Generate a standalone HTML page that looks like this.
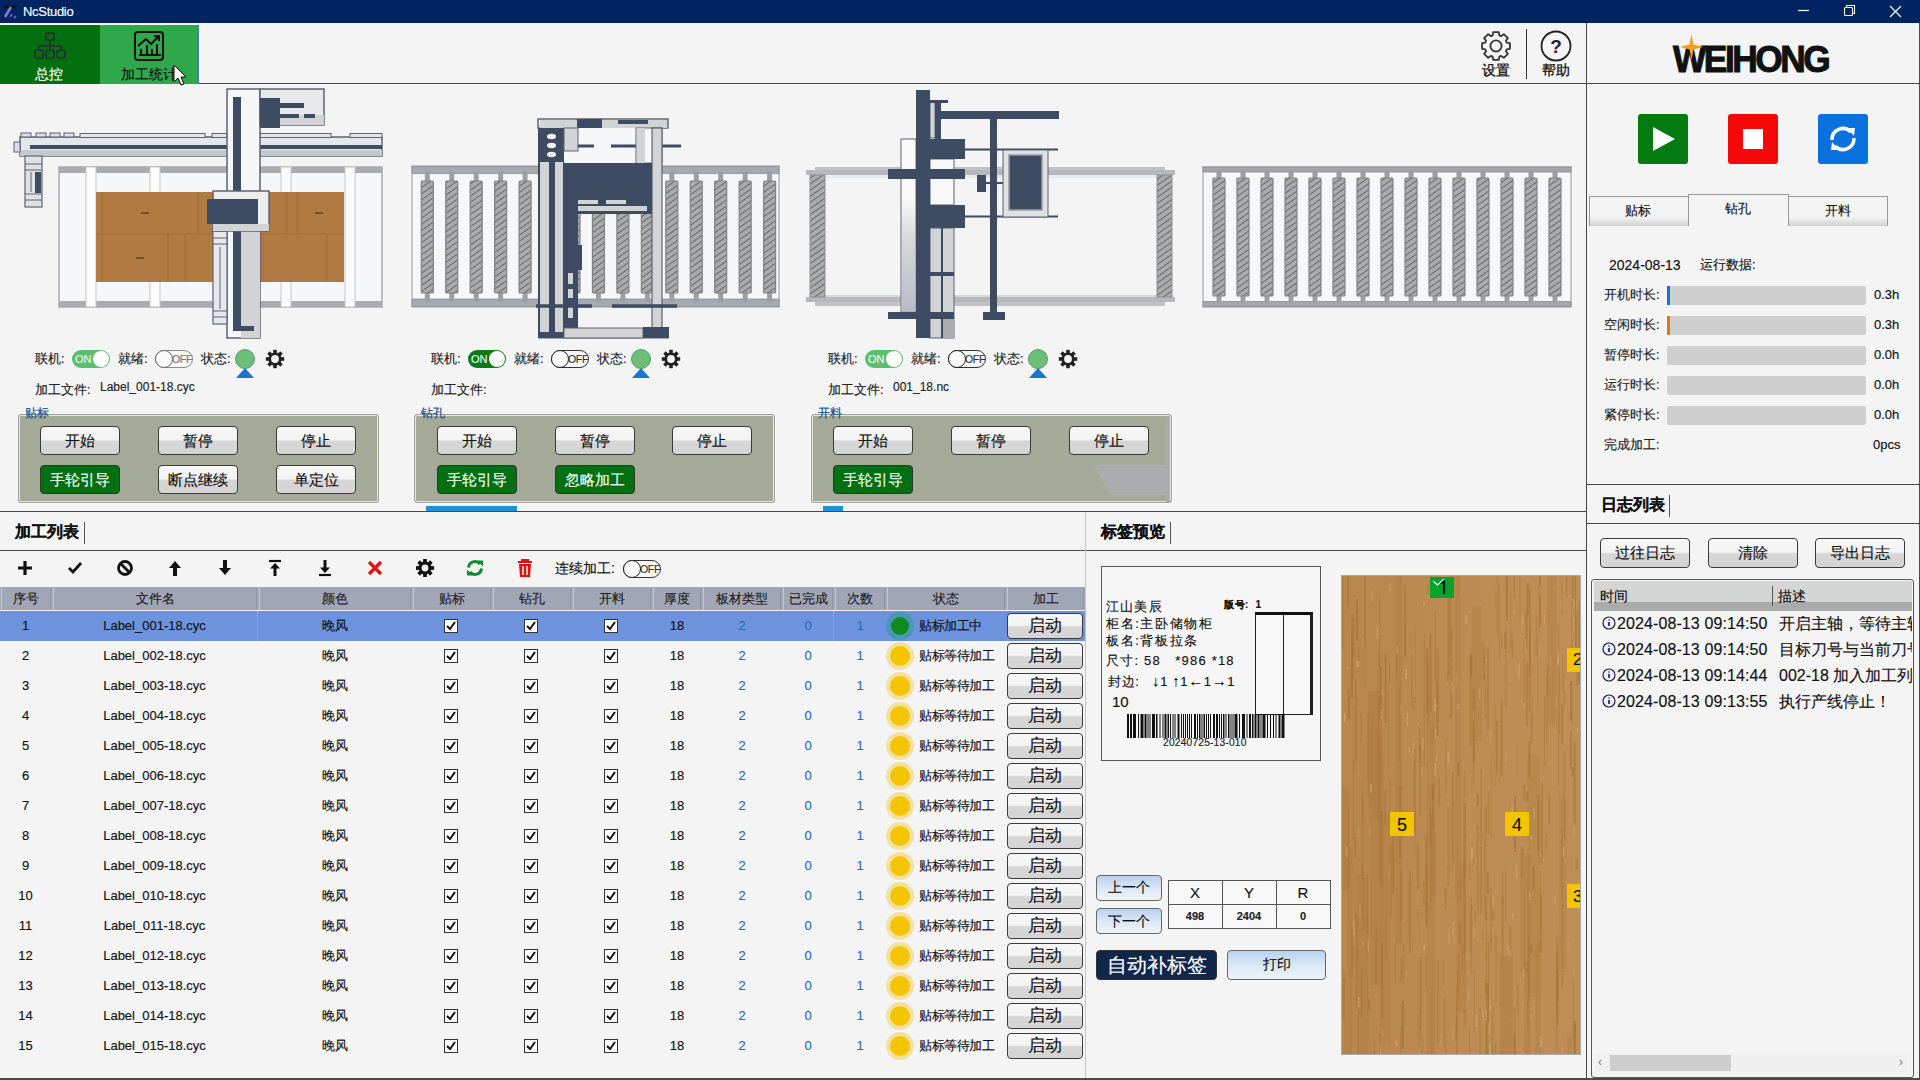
<!DOCTYPE html>
<html><head><meta charset="utf-8">
<style>
*{box-sizing:border-box;margin:0;padding:0}
html,body{width:1920px;height:1080px;overflow:hidden;background:#f4f4f4;font-family:"Liberation Sans",sans-serif;color:#111;position:relative;-webkit-text-stroke:0.15px currentColor}
.a{position:absolute}
.t{position:absolute;white-space:nowrap;line-height:1}
.hl{position:absolute;height:1px;background:#464646}
.vl{position:absolute;width:1px;background:#464646}
.btn{position:absolute;width:80px;height:29px;border:1px solid #3a3a3a;border-radius:4px;background:linear-gradient(#f7f7f7 0%,#f3f3f3 47%,#d6d6d6 53%,#d4d4d4 100%);font-size:15px;text-align:center;line-height:27px;color:#111}
.gbtn{position:absolute;width:80px;height:29px;border:1px solid #2a3a2a;border-radius:4px;background:#036e12;font-size:15px;text-align:center;line-height:27px;color:#f4fff4}
.grp{position:absolute;width:361px;height:89px;border:1px solid #9c9c9c;box-shadow:inset 0 0 0 1px #e6e6e6,0 0 0 1px #fbfbfb;border-radius:3px;background:#a5aa98}
.glab{position:absolute;font-size:11.5px;color:#174f8a;line-height:1;-webkit-text-stroke:0.2px #174f8a}
.lab{font-size:13px;color:#222}
.tog{position:absolute;width:38px;height:18px;border-radius:9px}
.ton{background:#5cbf6f}
.ton2{background:#0a7a1a}
.ton span,.ton2 span{position:absolute;left:3px;top:2px;font-size:11px;color:#e8f5e8;line-height:14px}
.ton i,.ton2 i{position:absolute;right:1px;top:1px;width:16px;height:16px;border-radius:8px;background:#fff}
.toff{border:1px solid #8a8a8a;background:#f8f8f8}
.toff i{position:absolute;left:-1px;top:-1px;width:18px;height:18px;border-radius:9px;border:1px solid #666;background:#fbfbfb}
.toff span{position:absolute;left:16px;top:2px;font-size:10.5px;color:#777;line-height:12px;letter-spacing:-0.3px}
</style></head><body>
<!-- title bar -->
<div class="a" style="left:0;top:0;width:1920px;height:23px;background:#002462"></div>
<div class="t" style="left:23px;top:5px;font-size:13px;color:#fff;letter-spacing:-0.3px">NcStudio</div>
<svg class="a" style="left:2px;top:4px" width="18" height="16" viewBox="0 0 18 16"><path d="M2 3h12" stroke="#111" stroke-width="2.5"/><path d="M9 3L3 13" stroke="#8a7ad8" stroke-width="2.5"/><path d="M10 10l-2 3M14 12l-2 2" stroke="#6a5ac8" stroke-width="2"/></svg>
<svg class="a" style="left:1798px;top:9px" width="12" height="3"><path d="M0 1.5h11" stroke="#fff" stroke-width="1.2"/></svg>
<svg class="a" style="left:1843px;top:4px" width="13" height="13"><path d="M3.5 3.5V1.5h8v8h-2" stroke="#fff" stroke-width="1.1" fill="none"/><rect x="1.5" y="3.5" width="8" height="8" rx="1" stroke="#fff" stroke-width="1.1" fill="none"/></svg>
<svg class="a" style="left:1889px;top:5px" width="13" height="13"><path d="M1 1l11 11M12 1L1 12" stroke="#fff" stroke-width="1.2"/></svg>
<!-- toolbar -->
<div class="a" style="left:0;top:25px;width:100px;height:59px;background:#026e0d"></div>
<div class="a" style="left:100px;top:25px;width:99px;height:59px;background:#2ea84b;border-right:1px solid #3a7ab0"></div>
<div class="hl" style="left:199px;top:83px;width:1721px"></div>
<div class="vl" style="left:1586px;top:23px;height:1057px"></div>

<!-- tab icons -->
<svg class="a" style="left:33px;top:31px" width="34" height="30" viewBox="0 0 34 30"><g fill="none" stroke="#2a2a3a" stroke-width="1.6"><rect x="13" y="2" width="8" height="7" rx="1.5"/><path d="M17 9v6M6 19v-4h22v4M17 15v4"/><rect x="2" y="19" width="8" height="8" rx="2"/><rect x="13" y="19" width="8" height="8" rx="2"/><rect x="24" y="19" width="8" height="8" rx="2"/></g></svg>
<div class="t" style="left:35px;top:67px;font-size:14px;color:#fff">总控</div>
<svg class="a" style="left:133px;top:30px" width="32" height="32" viewBox="0 0 32 32"><g fill="none" stroke="#111" stroke-width="2"><rect x="2" y="2" width="28" height="28" rx="3"/><path d="M5 16l8-7 5 5 8-8M21 6h5v5"/><path d="M6 25h22M8 24v-5M14 24v-9M19 24v-5M24 24v-10"/></g></svg>
<div class="t" style="left:121px;top:67px;font-size:14px;color:#111">加工统计</div>
<svg class="a" style="left:173px;top:64px" width="14" height="22" viewBox="0 0 14 22"><path d="M1 1v17l4-4 3 7 3-1-3-7h5z" fill="#fff" stroke="#000" stroke-width="1"/></svg>
<!-- settings/help -->
<svg class="a" style="left:1480px;top:30px" width="32" height="32" viewBox="0 0 32 32"><path d="M26.70 12.69 L29.92 13.18 L29.92 18.82 L26.70 19.31 L25.91 21.23 L27.84 23.85 L23.85 27.84 L21.23 25.91 L19.31 26.70 L18.82 29.92 L13.18 29.92 L12.69 26.70 L10.77 25.91 L8.15 27.84 L4.16 23.85 L6.09 21.23 L5.30 19.31 L2.08 18.82 L2.08 13.18 L5.30 12.69 L6.09 10.77 L4.16 8.15 L8.15 4.16 L10.77 6.09 L12.69 5.30 L13.18 2.08 L18.82 2.08 L19.31 5.30 L21.23 6.09 L23.85 4.16 L27.84 8.15 L25.91 10.77Z" fill="none" stroke="#333" stroke-width="1.8" stroke-linejoin="round"/><circle cx="16" cy="16" r="5.6" fill="none" stroke="#333" stroke-width="1.8"/></svg>
<div class="t" style="left:1482px;top:63px;font-size:14px;color:#111;-webkit-text-stroke:0.3px #111">设置</div>
<div class="a" style="left:1526px;top:29px;width:1px;height:50px;background:#333"></div>
<svg class="a" style="left:1540px;top:30px" width="32" height="32" viewBox="0 0 32 32"><circle cx="16" cy="16" r="14.5" fill="none" stroke="#222" stroke-width="1.8"/><text x="16" y="22.5" font-size="19" font-weight="bold" text-anchor="middle" font-family="Liberation Sans" fill="#222">?</text></svg>
<div class="t" style="left:1542px;top:63px;font-size:14px;color:#111;-webkit-text-stroke:0.3px #111">帮助</div>
<!-- logo -->
<div class="t" style="left:1673px;top:42px;font-size:36px;font-weight:bold;color:#111;letter-spacing:-2.5px;-webkit-text-stroke:1px #111;transform:scaleX(0.98);transform-origin:left">WEIHONG</div>
<svg class="a" style="left:1680px;top:34px" width="23" height="26" viewBox="0 0 23 26"><path d="M11.5 0 L13.5 10.5 L23 13 L13.5 15.5 L11.5 26 L9.5 15.5 L0 13 L9.5 10.5z" fill="#f0a020"/></svg>
<!-- control buttons -->
<div class="a" style="left:1638px;top:114px;width:50px;height:50px;background:#047a10;border-radius:3px"></div>
<svg class="a" style="left:1638px;top:114px" width="50" height="50"><path d="M15 13 L37 25 L15 37z" fill="#fff"/></svg>
<div class="a" style="left:1728px;top:114px;width:50px;height:50px;background:#f70808;border-radius:3px"></div>
<div class="a" style="left:1743px;top:129px;width:20px;height:20px;background:#fff"></div>
<div class="a" style="left:1818px;top:114px;width:50px;height:50px;background:#0a72e0;border-radius:3px"></div>
<svg class="a" style="left:1818px;top:114px" width="50" height="50" viewBox="0 0 50 50"><g fill="none" stroke="#fff" stroke-width="3.5"><path d="M14 26a11 11 0 0 1 19-8"/><path d="M36 24a11 11 0 0 1-19 8"/></g><path d="M29 14l8 0-1 8z" fill="#fff"/><path d="M21 36l-8 0 1-8z" fill="#fff"/></svg>

<!-- right tabs -->
<div class="a" style="left:1589px;top:196px;width:100px;height:30px;border:1px solid #9a9a9a;border-bottom:none;background:linear-gradient(#f4f4f4 70%,#d0d0d0 100%)"></div>
<div class="t" style="left:1625px;top:204px;font-size:13px">贴标</div>
<div class="a" style="left:1688px;top:194px;width:101px;height:32px;border:1px solid #9a9a9a;border-bottom:none;background:#f4f4f4"></div>
<div class="t" style="left:1725px;top:202px;font-size:13px">钻孔</div>
<div class="a" style="left:1788px;top:196px;width:100px;height:30px;border:1px solid #9a9a9a;border-bottom:none;background:linear-gradient(#f4f4f4 70%,#d0d0d0 100%)"></div>
<div class="t" style="left:1825px;top:204px;font-size:13px">开料</div>
<!-- running data -->
<div class="t" style="left:1609px;top:258px;font-size:14px">2024-08-13</div>
<div class="t" style="left:1700px;top:258px;font-size:13px">运行数据:</div>
<div class="t lab" style="left:1604px;top:288px">开机时长:</div>
<div class="a" style="left:1667px;top:286px;width:199px;height:19px;background:#cfcfcf;border-radius:2px"></div>
<div class="a" style="left:1667px;top:286px;width:3px;height:19px;background:#1a6fd8"></div>
<div class="t" style="left:1874px;top:288px;font-size:13px">0.3h</div>
<div class="t lab" style="left:1604px;top:318px">空闲时长:</div>
<div class="a" style="left:1667px;top:316px;width:199px;height:19px;background:#cfcfcf;border-radius:2px"></div>
<div class="a" style="left:1667px;top:316px;width:3px;height:19px;background:#d87a1a"></div>
<div class="t" style="left:1874px;top:318px;font-size:13px">0.3h</div>
<div class="t lab" style="left:1604px;top:348px">暂停时长:</div>
<div class="a" style="left:1667px;top:346px;width:199px;height:19px;background:#cfcfcf;border-radius:2px"></div>
<div class="t" style="left:1874px;top:348px;font-size:13px">0.0h</div>
<div class="t lab" style="left:1604px;top:378px">运行时长:</div>
<div class="a" style="left:1667px;top:376px;width:199px;height:19px;background:#cfcfcf;border-radius:2px"></div>
<div class="t" style="left:1874px;top:378px;font-size:13px">0.0h</div>
<div class="t lab" style="left:1604px;top:408px">紧停时长:</div>
<div class="a" style="left:1667px;top:406px;width:199px;height:19px;background:#cfcfcf;border-radius:2px"></div>
<div class="t" style="left:1874px;top:408px;font-size:13px">0.0h</div>
<div class="t lab" style="left:1604px;top:438px">完成加工:</div>
<div class="t" style="left:1873px;top:438px;font-size:13px">0pcs</div>
<div class="hl" style="left:1586px;top:484px;width:334px"></div>
<!-- log list -->
<div class="t" style="left:1601px;top:497px;font-size:16px;font-weight:bold">日志列表</div>
<div class="a" style="left:1669px;top:495px;width:1px;height:22px;background:#555"></div>
<div class="hl" style="left:1586px;top:523px;width:334px"></div>
<div class="btn" style="left:1600px;top:538px;width:90px;height:30px;line-height:28px;font-size:15px">过往日志</div>
<div class="btn" style="left:1708px;top:538px;width:90px;height:30px;line-height:28px;font-size:15px">清除</div>
<div class="btn" style="left:1815px;top:538px;width:90px;height:30px;line-height:28px;font-size:15px">导出日志</div>
<div class="a" style="left:1591px;top:579px;width:323px;height:499px;border:1.5px solid #585858;border-radius:3px;background:#f4f4f4"></div>
<div class="a" style="left:1594px;top:581px;width:318px;height:30px;background:linear-gradient(#d4d5d5 0%,#d3d4d4 70%,#a9abab 70%,#a9abab 100%)"></div>
<div class="a" style="left:1772px;top:586px;width:1px;height:20px;background:#555"></div>
<div class="t" style="left:1600px;top:589px;font-size:14px">时间</div>
<div class="t" style="left:1778px;top:589px;font-size:14px">描述</div>
<svg class="a" style="left:1601px;top:616px" width="16" height="16" viewBox="0 0 16 16"><circle cx="8" cy="7" r="6" fill="#eef" stroke="#223" stroke-width="1.2"/><path d="M8 6v4M8 3.5v1" stroke="#1a2a9a" stroke-width="1.8"/></svg>
<div class="t" style="left:1617px;top:616px;font-size:16px;letter-spacing:0.1px">2024-08-13 09:14:50</div>
<div class="t" style="left:1779px;top:616px;font-size:16px;width:133px;overflow:hidden">开启主轴，等待主轴</div>
<svg class="a" style="left:1601px;top:642px" width="16" height="16" viewBox="0 0 16 16"><circle cx="8" cy="7" r="6" fill="#eef" stroke="#223" stroke-width="1.2"/><path d="M8 6v4M8 3.5v1" stroke="#1a2a9a" stroke-width="1.8"/></svg>
<div class="t" style="left:1617px;top:642px;font-size:16px;letter-spacing:0.1px">2024-08-13 09:14:50</div>
<div class="t" style="left:1779px;top:642px;font-size:16px;width:133px;overflow:hidden">目标刀号与当前刀号</div>
<svg class="a" style="left:1601px;top:668px" width="16" height="16" viewBox="0 0 16 16"><circle cx="8" cy="7" r="6" fill="#eef" stroke="#223" stroke-width="1.2"/><path d="M8 6v4M8 3.5v1" stroke="#1a2a9a" stroke-width="1.8"/></svg>
<div class="t" style="left:1617px;top:668px;font-size:16px;letter-spacing:0.1px">2024-08-13 09:14:44</div>
<div class="t" style="left:1779px;top:668px;font-size:16px;width:133px;overflow:hidden">002-18 加入加工列表</div>
<svg class="a" style="left:1601px;top:694px" width="16" height="16" viewBox="0 0 16 16"><circle cx="8" cy="7" r="6" fill="#eef" stroke="#223" stroke-width="1.2"/><path d="M8 6v4M8 3.5v1" stroke="#1a2a9a" stroke-width="1.8"/></svg>
<div class="t" style="left:1617px;top:694px;font-size:16px;letter-spacing:0.1px">2024-08-13 09:13:55</div>
<div class="t" style="left:1779px;top:694px;font-size:16px;width:133px;overflow:hidden">执行产线停止！</div>

<div class="a" style="left:1595px;top:1054px;width:316px;height:18px;background:#f0f0f0"></div>
<div class="a" style="left:1610px;top:1055px;width:121px;height:16px;background:#cdcdcd"></div>
<div class="t" style="left:1598px;top:1056px;font-size:12px;color:#888">&#8249;</div>
<div class="t" style="left:1899px;top:1056px;font-size:12px;color:#888">&#8250;</div>


<!-- machines -->
<svg class="a" style="left:0;top:84px" width="1585" height="265" viewBox="0 84 1585 265">
<defs><pattern id="hat" width="5" height="5" patternUnits="userSpaceOnUse" patternTransform="rotate(-35)"><rect width="5" height="5" fill="#a9aaac"/><line x1="0" y1="0.5" x2="5" y2="0.5" stroke="#66686b" stroke-width="1"/></pattern><linearGradient id="wood" x1="0" x2="1"><stop offset="0" stop-color="#b07940"/><stop offset="1" stop-color="#ad7a42"/></linearGradient></defs>
<rect x="59" y="167" width="323" height="140" fill="#f6f7f8" stroke="#a9abae" stroke-width="1.5"/>
<rect x="59" y="167" width="323" height="6" fill="#a9abae"/>
<rect x="59" y="301" width="323" height="6" fill="#a9abae"/>
<rect x="86" y="167" width="10" height="140" fill="#fbfbfb" stroke="#c8c8c8" stroke-width="1"/>
<rect x="150" y="167" width="10" height="140" fill="#fbfbfb" stroke="#c8c8c8" stroke-width="1"/>
<rect x="281" y="167" width="10" height="140" fill="#fbfbfb" stroke="#c8c8c8" stroke-width="1"/>
<rect x="345" y="167" width="10" height="140" fill="#fbfbfb" stroke="#c8c8c8" stroke-width="1"/>
<rect x="96" y="192" width="248" height="90" fill="#b07a42"/>
<path d="M96 234H344M102 192V282M198 192V234M287 192V234M297 192V234M168 234V282M185 234V282M262 234V282M327 234V282" stroke="#9a6530" stroke-width="1" fill="none" opacity="0.55"/>
<path d="M141 213h8M136 258h8M315 213h8" stroke="#3a2a1a" stroke-width="1.2"/>
<rect x="20" y="137" width="362" height="19" fill="#e4e6e9" stroke="#5c6372" stroke-width="1.5"/>
<rect x="20" y="150" width="362" height="6" fill="#c4c8cf"/>
<rect x="30" y="145" width="352" height="4" fill="#3d4b63"/>
<rect x="21" y="133" width="10" height="4" fill="#dde" stroke="#5c6372" stroke-width="1"/>
<rect x="36" y="133" width="10" height="4" fill="#dde" stroke="#5c6372" stroke-width="1"/>
<rect x="50" y="133" width="10" height="4" fill="#dde" stroke="#5c6372" stroke-width="1"/>
<rect x="64" y="133" width="10" height="4" fill="#dde" stroke="#5c6372" stroke-width="1"/>
<rect x="80" y="133.5" width="125" height="4" fill="#e4e6ea" stroke="#5c6372" stroke-width="1"/><rect x="212" y="133.5" width="15" height="4" fill="#e4e6ea" stroke="#5c6372" stroke-width="1"/><rect x="260" y="133.5" width="71" height="4" fill="#e4e6ea" stroke="#5c6372" stroke-width="1"/><rect x="350" y="133.5" width="32" height="4" fill="#e4e6ea" stroke="#5c6372" stroke-width="1"/>
<rect x="14" y="142" width="6" height="10" fill="#dde" stroke="#5c6372" stroke-width="1"/>
<rect x="25" y="156" width="17" height="51" fill="#dfe1e4" stroke="#5c6372" stroke-width="1.2"/>
<path d="M25 164h17M25 170h17M25 194h17M25 200h17M31 172v20" stroke="#5c6372" stroke-width="1"/>
<rect x="35" y="172" width="6" height="21" fill="#3d4b63"/>
<rect x="227" y="89" width="33" height="249" fill="#f6f7f8" stroke="#5c6372" stroke-width="1.5"/>
<rect x="241" y="231" width="19" height="107" fill="#d2d3d5"/>
<path d="M233 97h8v229h13v5h-21z" fill="#3d4b63"/>
<rect x="260" y="89" width="64" height="36" fill="#e8e9ea" stroke="#5c6372" stroke-width="1.5"/>
<rect x="280" y="115" width="44" height="10" fill="#d2d3d5"/>
<rect x="260" y="98" width="20" height="30" fill="#3d4b63"/>
<rect x="280" y="103" width="24" height="5" fill="#3d4b63"/>
<rect x="280" y="114" width="19" height="4" fill="#3d4b63"/>
<rect x="304" y="114" width="11" height="4" fill="#3d4b63"/>
<rect x="213" y="231" width="14" height="93" fill="#e6e8ea" stroke="#5c6372" stroke-width="1.2"/>
<path d="M213 238h14M213 244h14M213 311h14M213 317h14M220 247v62" stroke="#5c6372" stroke-width="1"/>
<rect x="213" y="191" width="56" height="40" fill="#eceef0" stroke="#5c6372" stroke-width="1.5"/>
<rect x="213" y="224" width="56" height="7" fill="#d2d3d5"/>
<rect x="207" y="199" width="51" height="25" fill="#3d4b63"/>
<rect x="412" y="166" width="367" height="141" fill="#f6f7f8" stroke="#b5b7ba" stroke-width="1.5"/>
<rect x="412" y="166.5" width="367" height="7" fill="#a5a9b2" stroke="#8c9098" stroke-width="0.8"/>
<rect x="412" y="299" width="367" height="7.5" fill="#a5a9b2" stroke="#8c9098" stroke-width="0.8"/>
<rect x="424.8" y="171" width="5" height="11" fill="#9c9ea2"/>
<rect x="424.8" y="292" width="5" height="10" fill="#9c9ea2"/>
<rect x="421.3" y="181" width="12" height="112" rx="1" fill="url(#hat)" stroke="#808285" stroke-width="1.2"/>
<rect x="449.25" y="171" width="5" height="11" fill="#9c9ea2"/>
<rect x="449.25" y="292" width="5" height="10" fill="#9c9ea2"/>
<rect x="445.75" y="181" width="12" height="112" rx="1" fill="url(#hat)" stroke="#808285" stroke-width="1.2"/>
<rect x="473.7" y="171" width="5" height="11" fill="#9c9ea2"/>
<rect x="473.7" y="292" width="5" height="10" fill="#9c9ea2"/>
<rect x="470.2" y="181" width="12" height="112" rx="1" fill="url(#hat)" stroke="#808285" stroke-width="1.2"/>
<rect x="498.15" y="171" width="5" height="11" fill="#9c9ea2"/>
<rect x="498.15" y="292" width="5" height="10" fill="#9c9ea2"/>
<rect x="494.65" y="181" width="12" height="112" rx="1" fill="url(#hat)" stroke="#808285" stroke-width="1.2"/>
<rect x="522.6" y="171" width="5" height="11" fill="#9c9ea2"/>
<rect x="522.6" y="292" width="5" height="10" fill="#9c9ea2"/>
<rect x="519.1" y="181" width="12" height="112" rx="1" fill="url(#hat)" stroke="#808285" stroke-width="1.2"/>
<rect x="547.05" y="171" width="5" height="11" fill="#9c9ea2"/>
<rect x="547.05" y="292" width="5" height="10" fill="#9c9ea2"/>
<rect x="543.55" y="181" width="12" height="112" rx="1" fill="url(#hat)" stroke="#808285" stroke-width="1.2"/>
<rect x="571.5" y="171" width="5" height="11" fill="#9c9ea2"/>
<rect x="571.5" y="292" width="5" height="10" fill="#9c9ea2"/>
<rect x="568.0" y="181" width="12" height="112" rx="1" fill="url(#hat)" stroke="#808285" stroke-width="1.2"/>
<rect x="595.95" y="171" width="5" height="11" fill="#9c9ea2"/>
<rect x="595.95" y="292" width="5" height="10" fill="#9c9ea2"/>
<rect x="592.45" y="181" width="12" height="112" rx="1" fill="url(#hat)" stroke="#808285" stroke-width="1.2"/>
<rect x="620.4" y="171" width="5" height="11" fill="#9c9ea2"/>
<rect x="620.4" y="292" width="5" height="10" fill="#9c9ea2"/>
<rect x="616.9" y="181" width="12" height="112" rx="1" fill="url(#hat)" stroke="#808285" stroke-width="1.2"/>
<rect x="644.85" y="171" width="5" height="11" fill="#9c9ea2"/>
<rect x="644.85" y="292" width="5" height="10" fill="#9c9ea2"/>
<rect x="641.35" y="181" width="12" height="112" rx="1" fill="url(#hat)" stroke="#808285" stroke-width="1.2"/>
<rect x="669.3" y="171" width="5" height="11" fill="#9c9ea2"/>
<rect x="669.3" y="292" width="5" height="10" fill="#9c9ea2"/>
<rect x="665.8" y="181" width="12" height="112" rx="1" fill="url(#hat)" stroke="#808285" stroke-width="1.2"/>
<rect x="693.75" y="171" width="5" height="11" fill="#9c9ea2"/>
<rect x="693.75" y="292" width="5" height="10" fill="#9c9ea2"/>
<rect x="690.25" y="181" width="12" height="112" rx="1" fill="url(#hat)" stroke="#808285" stroke-width="1.2"/>
<rect x="718.2" y="171" width="5" height="11" fill="#9c9ea2"/>
<rect x="718.2" y="292" width="5" height="10" fill="#9c9ea2"/>
<rect x="714.7" y="181" width="12" height="112" rx="1" fill="url(#hat)" stroke="#808285" stroke-width="1.2"/>
<rect x="742.65" y="171" width="5" height="11" fill="#9c9ea2"/>
<rect x="742.65" y="292" width="5" height="10" fill="#9c9ea2"/>
<rect x="739.15" y="181" width="12" height="112" rx="1" fill="url(#hat)" stroke="#808285" stroke-width="1.2"/>
<rect x="767.1" y="171" width="5" height="11" fill="#9c9ea2"/>
<rect x="767.1" y="292" width="5" height="10" fill="#9c9ea2"/>
<rect x="763.6" y="181" width="12" height="112" rx="1" fill="url(#hat)" stroke="#808285" stroke-width="1.2"/>
<rect x="1203" y="167" width="368" height="140" fill="#f6f7f8" stroke="#b5b7ba" stroke-width="1.5"/>
<rect x="1203" y="167" width="368" height="5" fill="#a4a6aa" stroke="#8a8c90" stroke-width="0.8"/>
<rect x="1203" y="301.5" width="368" height="5" fill="#a4a6aa" stroke="#8a8c90" stroke-width="0.8"/>
<rect x="1216.5" y="172" width="5" height="7" fill="#9c9ea2"/>
<rect x="1216.5" y="295" width="5" height="7" fill="#9c9ea2"/>
<rect x="1213" y="178" width="12" height="118" rx="1" fill="url(#hat)" stroke="#808285" stroke-width="1.2"/>
<rect x="1240.5" y="172" width="5" height="7" fill="#9c9ea2"/>
<rect x="1240.5" y="295" width="5" height="7" fill="#9c9ea2"/>
<rect x="1237" y="178" width="12" height="118" rx="1" fill="url(#hat)" stroke="#808285" stroke-width="1.2"/>
<rect x="1264.5" y="172" width="5" height="7" fill="#9c9ea2"/>
<rect x="1264.5" y="295" width="5" height="7" fill="#9c9ea2"/>
<rect x="1261" y="178" width="12" height="118" rx="1" fill="url(#hat)" stroke="#808285" stroke-width="1.2"/>
<rect x="1288.5" y="172" width="5" height="7" fill="#9c9ea2"/>
<rect x="1288.5" y="295" width="5" height="7" fill="#9c9ea2"/>
<rect x="1285" y="178" width="12" height="118" rx="1" fill="url(#hat)" stroke="#808285" stroke-width="1.2"/>
<rect x="1312.5" y="172" width="5" height="7" fill="#9c9ea2"/>
<rect x="1312.5" y="295" width="5" height="7" fill="#9c9ea2"/>
<rect x="1309" y="178" width="12" height="118" rx="1" fill="url(#hat)" stroke="#808285" stroke-width="1.2"/>
<rect x="1336.5" y="172" width="5" height="7" fill="#9c9ea2"/>
<rect x="1336.5" y="295" width="5" height="7" fill="#9c9ea2"/>
<rect x="1333" y="178" width="12" height="118" rx="1" fill="url(#hat)" stroke="#808285" stroke-width="1.2"/>
<rect x="1360.5" y="172" width="5" height="7" fill="#9c9ea2"/>
<rect x="1360.5" y="295" width="5" height="7" fill="#9c9ea2"/>
<rect x="1357" y="178" width="12" height="118" rx="1" fill="url(#hat)" stroke="#808285" stroke-width="1.2"/>
<rect x="1384.5" y="172" width="5" height="7" fill="#9c9ea2"/>
<rect x="1384.5" y="295" width="5" height="7" fill="#9c9ea2"/>
<rect x="1381" y="178" width="12" height="118" rx="1" fill="url(#hat)" stroke="#808285" stroke-width="1.2"/>
<rect x="1408.5" y="172" width="5" height="7" fill="#9c9ea2"/>
<rect x="1408.5" y="295" width="5" height="7" fill="#9c9ea2"/>
<rect x="1405" y="178" width="12" height="118" rx="1" fill="url(#hat)" stroke="#808285" stroke-width="1.2"/>
<rect x="1432.5" y="172" width="5" height="7" fill="#9c9ea2"/>
<rect x="1432.5" y="295" width="5" height="7" fill="#9c9ea2"/>
<rect x="1429" y="178" width="12" height="118" rx="1" fill="url(#hat)" stroke="#808285" stroke-width="1.2"/>
<rect x="1456.5" y="172" width="5" height="7" fill="#9c9ea2"/>
<rect x="1456.5" y="295" width="5" height="7" fill="#9c9ea2"/>
<rect x="1453" y="178" width="12" height="118" rx="1" fill="url(#hat)" stroke="#808285" stroke-width="1.2"/>
<rect x="1480.5" y="172" width="5" height="7" fill="#9c9ea2"/>
<rect x="1480.5" y="295" width="5" height="7" fill="#9c9ea2"/>
<rect x="1477" y="178" width="12" height="118" rx="1" fill="url(#hat)" stroke="#808285" stroke-width="1.2"/>
<rect x="1504.5" y="172" width="5" height="7" fill="#9c9ea2"/>
<rect x="1504.5" y="295" width="5" height="7" fill="#9c9ea2"/>
<rect x="1501" y="178" width="12" height="118" rx="1" fill="url(#hat)" stroke="#808285" stroke-width="1.2"/>
<rect x="1528.5" y="172" width="5" height="7" fill="#9c9ea2"/>
<rect x="1528.5" y="295" width="5" height="7" fill="#9c9ea2"/>
<rect x="1525" y="178" width="12" height="118" rx="1" fill="url(#hat)" stroke="#808285" stroke-width="1.2"/>
<rect x="1552.5" y="172" width="5" height="7" fill="#9c9ea2"/>
<rect x="1552.5" y="295" width="5" height="7" fill="#9c9ea2"/>
<rect x="1549" y="178" width="12" height="118" rx="1" fill="url(#hat)" stroke="#808285" stroke-width="1.2"/>
<rect x="538" y="119" width="130" height="9" fill="none" stroke="#5c6372" stroke-width="1.5"/><rect x="538" y="128" width="1" height="210" fill="#5c6372"/><rect x="538" y="337" width="131" height="1.5" fill="#5c6372"/>
<rect x="564" y="128" width="72" height="35" fill="#f6f7f8"/>
<rect x="540" y="120" width="37" height="8" fill="#d2d3d5"/>
<rect x="577" y="119" width="25" height="9" fill="#3d4b63"/>
<rect x="602" y="120" width="65" height="8" fill="#d2d3d5"/>
<rect x="618" y="120" width="30" height="4" fill="#3d4b63"/>
<rect x="538" y="128" width="26" height="210" fill="#3d4b63"/>
<ellipse cx="551.5" cy="136.5" rx="4.5" ry="2.8" fill="#f4f4f4"/>
<ellipse cx="551.5" cy="145.5" rx="4.5" ry="2.8" fill="#f4f4f4"/>
<ellipse cx="551.5" cy="154.5" rx="4.5" ry="2.8" fill="#f4f4f4"/>
<rect x="540" y="162" width="9" height="170" fill="#d2d3d5"/>
<rect x="555" y="162" width="8" height="170" fill="#d2d3d5"/>
<rect x="564" y="128" width="14" height="23" fill="#d2d3d5" stroke="#5c6372" stroke-width="1"/>
<path d="M578 146h16M611 146h25M662 146h19" stroke="#3d4b63" stroke-width="3"/>
<rect x="636" y="128" width="26" height="35" fill="#f6f7f8" stroke="#5c6372" stroke-width="1"/>
<rect x="637" y="128" width="8" height="35" fill="#d2d3d5"/>
<rect x="652" y="128" width="10" height="200" fill="#d2d3d5" stroke="#5c6372" stroke-width="1.2"/>
<rect x="564" y="163" width="88" height="51" fill="#3d4b63"/>
<rect x="578" y="200" width="20" height="4" fill="#d2d3d5"/>
<rect x="606" y="200" width="20" height="4" fill="#d2d3d5"/>
<rect x="578" y="206" width="69" height="5" fill="#d2d3d5"/>
<path d="M564 214h14v31h4v25h-4v68h-14z" fill="#3d4b63"/>
<rect x="568" y="273" width="5" height="11" fill="#d2d3d5"/>
<rect x="568" y="289" width="5" height="9" fill="#d2d3d5"/>
<rect x="568" y="306" width="5" height="12" fill="#d2d3d5"/>
<path d="M536 306h56M612 306h65" stroke="#3d4b63" stroke-width="3.5"/>
<rect x="564" y="328" width="79" height="10" fill="#d2d3d5" stroke="#5c6372" stroke-width="1"/>
<rect x="643" y="327" width="26" height="11" fill="#3d4b63"/>
<rect x="815" y="167" width="350" height="3" fill="#bfc1c4"/>
<rect x="806" y="170" width="369" height="5" fill="#b6b8bb"/>
<rect x="825" y="175" width="332" height="3" fill="#e3ecf0"/>
<rect x="806" y="297" width="369" height="5" fill="#b6b8bb"/>
<rect x="815" y="302" width="350" height="4" fill="#bfc1c4"/>
<rect x="825" y="295" width="332" height="2" fill="#d8d8d8"/>
<rect x="810" y="175" width="15" height="122" fill="url(#hat)" stroke="#8d8f92" stroke-width="1"/>
<rect x="1157" y="175" width="15" height="122" fill="url(#hat)" stroke="#8d8f92" stroke-width="1"/>
<rect x="901" y="139" width="15" height="173" fill="#fafafa" stroke="#5c6372" stroke-width="1"/>
<defs><linearGradient id="colg" x1="0" y1="0" x2="0" y2="1"><stop offset="0" stop-color="#f8f8f8"/><stop offset="0.35" stop-color="#d6d8dc"/><stop offset="1" stop-color="#b8bcc6"/></linearGradient></defs><rect x="902" y="200" width="13" height="111" fill="url(#colg)"/>
<rect x="930" y="159" width="24" height="46" fill="#f8f8f8" stroke="#5c6372" stroke-width="1"/><rect x="930" y="228" width="24" height="110" fill="#d2d3d5" stroke="#5c6372" stroke-width="1"/><rect x="943" y="319" width="11" height="19" fill="#a9abae"/>
<rect x="941" y="228" width="2" height="110" fill="#3d4b63"/>
<rect x="930" y="272" width="24" height="4" fill="#3d4b63"/>
<rect x="930" y="102" width="5" height="36" fill="#d2d3d5" stroke="#5c6372" stroke-width="1"/>
<rect x="916" y="90" width="14" height="248" fill="#3d4b63"/>
<rect x="930" y="100" width="18" height="3" fill="#3d4b63"/>
<rect x="935" y="100" width="6" height="39" fill="#3d4b63"/>
<rect x="941" y="111" width="118" height="8" fill="#3d4b63"/>
<rect x="990" y="119" width="7" height="201" fill="#3d4b63"/>
<rect x="983" y="312" width="22" height="8" fill="#3d4b63"/>
<rect x="930" y="139" width="35" height="20" fill="#3d4b63"/>
<rect x="930" y="205" width="35" height="23" fill="#3d4b63"/>
<rect x="888" y="169" width="77" height="10" fill="#3d4b63"/>
<rect x="888" y="312" width="66" height="7" fill="#3d4b63"/>
<path d="M965 149.5h93M965 216.5h93" stroke="#3d4b63" stroke-width="2"/>
<rect x="977" y="175" width="9" height="17" fill="#3d4b63"/>
<path d="M986 183h17" stroke="#3d4b63" stroke-width="2"/>
<rect x="1003" y="150" width="45" height="67" fill="#e0e1e3" stroke="#5c6372" stroke-width="1"/>
<rect x="1009" y="155" width="33" height="55" fill="#3d4b63" stroke="#9a9ca0" stroke-width="1.5"/>
</svg>

<!-- machine status rows -->
<div class="t lab" style="left:35px;top:352px">联机:</div>
<div class="tog ton" style="left:72px;top:350px"><span>ON</span><i></i></div>
<div class="t lab" style="left:118px;top:352px">就绪:</div>
<div class="tog toff" style="left:155px;top:350px"><i></i><span>OFF</span></div>
<div class="t lab" style="left:201px;top:352px">状态:</div>
<div class="a" style="left:235px;top:349px;width:20px;height:20px;border-radius:10px;background:#6cbf78;border:1px solid #5a9a6a"></div>
<svg class="a" style="left:235px;top:367px" width="20" height="12"><path d="M10 1 L19 11 L1 11z" fill="#1a78c8"/></svg>
<svg class="a" style="left:265.0px;top:348.5px" width="20" height="20" viewBox="-10 -10 20 20"><g fill="#222"><rect x="-1.8" y="-9.2" width="3.6" height="9.2" transform="rotate(0)"/><rect x="-1.8" y="-9.2" width="3.6" height="9.2" transform="rotate(45)"/><rect x="-1.8" y="-9.2" width="3.6" height="9.2" transform="rotate(90)"/><rect x="-1.8" y="-9.2" width="3.6" height="9.2" transform="rotate(135)"/><rect x="-1.8" y="-9.2" width="3.6" height="9.2" transform="rotate(180)"/><rect x="-1.8" y="-9.2" width="3.6" height="9.2" transform="rotate(225)"/><rect x="-1.8" y="-9.2" width="3.6" height="9.2" transform="rotate(270)"/><rect x="-1.8" y="-9.2" width="3.6" height="9.2" transform="rotate(315)"/><circle r="6.6"/></g><circle r="3.9" fill="#f4f4f4"/></svg>
<div class="t lab" style="left:35px;top:383px">加工文件:</div>
<div class="t" style="left:100px;top:381px;font-size:12px;color:#222">Label_001-18.cyc</div>
<div class="t lab" style="left:431px;top:352px">联机:</div>
<div class="tog ton2" style="left:468px;top:350px"><span>ON</span><i></i></div>
<div class="t lab" style="left:514px;top:352px">就绪:</div>
<div class="tog toff" style="left:551px;top:350px;border-color:#333"><i style="border-color:#222"></i><span style="color:#333">OFF</span></div>
<div class="t lab" style="left:597px;top:352px">状态:</div>
<div class="a" style="left:631px;top:349px;width:20px;height:20px;border-radius:10px;background:#6cbf78;border:1px solid #5a9a6a"></div>
<svg class="a" style="left:631px;top:367px" width="20" height="12"><path d="M10 1 L19 11 L1 11z" fill="#1a78c8"/></svg>
<svg class="a" style="left:661.0px;top:348.5px" width="20" height="20" viewBox="-10 -10 20 20"><g fill="#222"><rect x="-1.8" y="-9.2" width="3.6" height="9.2" transform="rotate(0)"/><rect x="-1.8" y="-9.2" width="3.6" height="9.2" transform="rotate(45)"/><rect x="-1.8" y="-9.2" width="3.6" height="9.2" transform="rotate(90)"/><rect x="-1.8" y="-9.2" width="3.6" height="9.2" transform="rotate(135)"/><rect x="-1.8" y="-9.2" width="3.6" height="9.2" transform="rotate(180)"/><rect x="-1.8" y="-9.2" width="3.6" height="9.2" transform="rotate(225)"/><rect x="-1.8" y="-9.2" width="3.6" height="9.2" transform="rotate(270)"/><rect x="-1.8" y="-9.2" width="3.6" height="9.2" transform="rotate(315)"/><circle r="6.6"/></g><circle r="3.9" fill="#f4f4f4"/></svg>
<div class="t lab" style="left:431px;top:383px">加工文件:</div>
<div class="t lab" style="left:828px;top:352px">联机:</div>
<div class="tog ton" style="left:865px;top:350px"><span>ON</span><i></i></div>
<div class="t lab" style="left:911px;top:352px">就绪:</div>
<div class="tog toff" style="left:948px;top:350px;border-color:#333"><i style="border-color:#222"></i><span style="color:#333">OFF</span></div>
<div class="t lab" style="left:994px;top:352px">状态:</div>
<div class="a" style="left:1028px;top:349px;width:20px;height:20px;border-radius:10px;background:#6cbf78;border:1px solid #5a9a6a"></div>
<svg class="a" style="left:1028px;top:367px" width="20" height="12"><path d="M10 1 L19 11 L1 11z" fill="#1a78c8"/></svg>
<svg class="a" style="left:1058.0px;top:348.5px" width="20" height="20" viewBox="-10 -10 20 20"><g fill="#222"><rect x="-1.8" y="-9.2" width="3.6" height="9.2" transform="rotate(0)"/><rect x="-1.8" y="-9.2" width="3.6" height="9.2" transform="rotate(45)"/><rect x="-1.8" y="-9.2" width="3.6" height="9.2" transform="rotate(90)"/><rect x="-1.8" y="-9.2" width="3.6" height="9.2" transform="rotate(135)"/><rect x="-1.8" y="-9.2" width="3.6" height="9.2" transform="rotate(180)"/><rect x="-1.8" y="-9.2" width="3.6" height="9.2" transform="rotate(225)"/><rect x="-1.8" y="-9.2" width="3.6" height="9.2" transform="rotate(270)"/><rect x="-1.8" y="-9.2" width="3.6" height="9.2" transform="rotate(315)"/><circle r="6.6"/></g><circle r="3.9" fill="#f4f4f4"/></svg>
<div class="t lab" style="left:828px;top:383px">加工文件:</div>
<div class="t" style="left:893px;top:381px;font-size:12px;color:#222">001_18.nc</div>
<div class="grp" style="left:18px;top:414px"></div>
<div class="glab" style="left:25px;top:408px">贴标</div>
<div class="btn" style="left:40px;top:426px">开始</div>
<div class="btn" style="left:158px;top:426px">暂停</div>
<div class="btn" style="left:276px;top:426px">停止</div>
<div class="gbtn" style="left:40px;top:465px">手轮引导</div>
<div class="btn" style="left:158px;top:465px">断点继续</div>
<div class="btn" style="left:276px;top:465px">单定位</div>
<div class="grp" style="left:414px;top:414px"></div>
<div class="glab" style="left:421px;top:408px">钻孔</div>
<div class="btn" style="left:437px;top:426px">开始</div>
<div class="btn" style="left:555px;top:426px">暂停</div>
<div class="btn" style="left:672px;top:426px">停止</div>
<div class="gbtn" style="left:437px;top:465px">手轮引导</div>
<div class="gbtn" style="left:555px;top:465px">忽略加工</div>
<div class="grp" style="left:811px;top:414px"></div>
<div class="glab" style="left:818px;top:408px">开料</div>
<div class="btn" style="left:833px;top:426px">开始</div>
<div class="btn" style="left:951px;top:426px">暂停</div>
<div class="btn" style="left:1069px;top:426px">停止</div>
<div class="gbtn" style="left:833px;top:465px">手轮引导</div>
<svg class="a" style="left:1080px;top:415px" width="92" height="88"><path d="M14 50H86V80H30z" fill="#aaadae"/><rect x="86" y="2" width="4" height="85" fill="#aaadae"/></svg>
<div class="a" style="left:426px;top:506px;width:91px;height:5px;background:#1e90d8"></div>
<div class="a" style="left:823px;top:506px;width:20px;height:5px;background:#1e90d8"></div>
<div class="hl" style="left:0;top:511px;width:1586px"></div>

<!-- process list -->
<div class="t" style="left:15px;top:524px;font-size:16px;font-weight:bold">加工列表</div>
<div class="a" style="left:84px;top:522px;width:1px;height:22px;background:#555"></div>
<div class="hl" style="left:0;top:550px;width:1086px"></div>
<div class="vl" style="left:1085px;top:512px;height:566px;background:#c4c4c4"></div>
<svg class="a" style="left:16px;top:559px" width="18" height="18" viewBox="0 0 18 18"><path d="M9 2v14M2 9h14" stroke="#111" stroke-width="3.2"/></svg>
<svg class="a" style="left:66px;top:559px" width="18" height="18" viewBox="0 0 18 18"><path d="M3 9l4 4 8-9" stroke="#111" stroke-width="2.8" fill="none"/></svg>
<svg class="a" style="left:116px;top:559px" width="18" height="18" viewBox="0 0 18 18"><circle cx="9" cy="9" r="6.5" stroke="#111" stroke-width="2.8" fill="none"/><path d="M4.5 4.5l9 9" stroke="#111" stroke-width="2.8"/></svg>
<svg class="a" style="left:166px;top:559px" width="18" height="18" viewBox="0 0 18 18"><path d="M9 2l6 7h-4v8h-4v-8h-4z" fill="#111"/></svg>
<svg class="a" style="left:216px;top:559px" width="18" height="18" viewBox="0 0 18 18"><path d="M9 16l6-7h-4v-8h-4v8h-4z" fill="#111"/></svg>
<svg class="a" style="left:266px;top:559px" width="18" height="18" viewBox="0 0 18 18"><path d="M3 2h12" stroke="#111" stroke-width="2.2"/><path d="M9 4l5 5.5h-3.5v7.5h-3v-7.5h-3.5z" fill="#111"/></svg>
<svg class="a" style="left:316px;top:559px" width="18" height="18" viewBox="0 0 18 18"><path d="M3 16h12" stroke="#111" stroke-width="2.2"/><path d="M9 14l5-5.5h-3.5v-7.5h-3v7.5h-3.5z" fill="#111"/></svg>
<svg class="a" style="left:366px;top:559px" width="18" height="18" viewBox="0 0 18 18"><path d="M3 3l12 12M15 3l-12 12" stroke="#e81010" stroke-width="3.2"/></svg>
<svg class="a" style="left:415.0px;top:558.0px" width="20" height="20" viewBox="-10 -10 20 20"><g fill="#111"><rect x="-1.9" y="-9" width="3.8" height="9" transform="rotate(0)"/><rect x="-1.9" y="-9" width="3.8" height="9" transform="rotate(45)"/><rect x="-1.9" y="-9" width="3.8" height="9" transform="rotate(90)"/><rect x="-1.9" y="-9" width="3.8" height="9" transform="rotate(135)"/><rect x="-1.9" y="-9" width="3.8" height="9" transform="rotate(180)"/><rect x="-1.9" y="-9" width="3.8" height="9" transform="rotate(225)"/><rect x="-1.9" y="-9" width="3.8" height="9" transform="rotate(270)"/><rect x="-1.9" y="-9" width="3.8" height="9" transform="rotate(315)"/><circle r="6.4"/></g><circle r="3.4" fill="#f4f4f4"/></svg>
<svg class="a" style="left:465px;top:558px" width="20" height="20" viewBox="0 0 20 20"><g fill="none" stroke="#118a30" stroke-width="3"><path d="M3.5 9.5a6.5 6.5 0 0 1 11.5-3.5"/><path d="M16.5 10.5a6.5 6.5 0 0 1-11.5 3.5"/></g><path d="M12 2.5h6v6z" fill="#118a30"/><path d="M8 17.5h-6v-6z" fill="#118a30"/></svg>
<svg class="a" style="left:516px;top:558px" width="18" height="20" viewBox="0 0 18 20"><path d="M2 4h14M6 4v-2h6v2" stroke="#e01010" stroke-width="2" fill="none"/><path d="M3 6h12l-1 13h-10z" fill="#e01010"/><path d="M7 8v9M11 8v9" stroke="#f4f4f4" stroke-width="1.5"/></svg>
<div class="t" style="left:555px;top:561px;font-size:14px">连续加工:</div>
<div class="tog toff" style="left:623px;top:560px;height:18px;border-color:#333"><i style="border-color:#222"></i><span style="color:#333">OFF</span></div>
<div class="a" style="left:0;top:587px;width:1085px;height:23px;background:#a3a8b8"></div>
<div class="a" style="left:1px;top:588px;width:50px;height:22px;background:#a1a6b6;border-left:1px solid #c4c8d2;border-right:1px solid #8f94a4;font-size:13px;line-height:22px;text-align:center;color:#222">序号</div>
<div class="a" style="left:53px;top:588px;width:204px;height:22px;background:#a1a6b6;border-left:1px solid #c4c8d2;border-right:1px solid #8f94a4;font-size:13px;line-height:22px;text-align:center;color:#222">文件名</div>
<div class="a" style="left:259px;top:588px;width:152px;height:22px;background:#a1a6b6;border-left:1px solid #c4c8d2;border-right:1px solid #8f94a4;font-size:13px;line-height:22px;text-align:center;color:#222">颜色</div>
<div class="a" style="left:413px;top:588px;width:78px;height:22px;background:#a1a6b6;border-left:1px solid #c4c8d2;border-right:1px solid #8f94a4;font-size:13px;line-height:22px;text-align:center;color:#222">贴标</div>
<div class="a" style="left:493px;top:588px;width:78px;height:22px;background:#a1a6b6;border-left:1px solid #c4c8d2;border-right:1px solid #8f94a4;font-size:13px;line-height:22px;text-align:center;color:#222">钻孔</div>
<div class="a" style="left:573px;top:588px;width:78px;height:22px;background:#a1a6b6;border-left:1px solid #c4c8d2;border-right:1px solid #8f94a4;font-size:13px;line-height:22px;text-align:center;color:#222">开料</div>
<div class="a" style="left:653px;top:588px;width:48px;height:22px;background:#a1a6b6;border-left:1px solid #c4c8d2;border-right:1px solid #8f94a4;font-size:13px;line-height:22px;text-align:center;color:#222">厚度</div>
<div class="a" style="left:703px;top:588px;width:78px;height:22px;background:#a1a6b6;border-left:1px solid #c4c8d2;border-right:1px solid #8f94a4;font-size:13px;line-height:22px;text-align:center;color:#222">板材类型</div>
<div class="a" style="left:783px;top:588px;width:50px;height:22px;background:#a1a6b6;border-left:1px solid #c4c8d2;border-right:1px solid #8f94a4;font-size:13px;line-height:22px;text-align:center;color:#222">已完成</div>
<div class="a" style="left:835px;top:588px;width:50px;height:22px;background:#a1a6b6;border-left:1px solid #c4c8d2;border-right:1px solid #8f94a4;font-size:13px;line-height:22px;text-align:center;color:#222">次数</div>
<div class="a" style="left:887px;top:588px;width:118px;height:22px;background:#a1a6b6;border-left:1px solid #c4c8d2;border-right:1px solid #8f94a4;font-size:13px;line-height:22px;text-align:center;color:#222">状态</div>
<div class="a" style="left:1007px;top:588px;width:77px;height:22px;background:#a1a6b6;border-left:1px solid #c4c8d2;border-right:1px solid #8f94a4;font-size:13px;line-height:22px;text-align:center;color:#222">加工</div>
<div class="a" style="left:0;top:611px;width:1085px;height:30px;background:#6d93df"></div>
<div class="a" style="left:257px;top:611px;width:1px;height:30px;background:#8aaae8"></div>
<div class="a" style="left:833px;top:611px;width:1px;height:30px;background:#8aaae8"></div>
<div class="t" style="left:0;width:51px;text-align:center;top:619px;font-size:13px">1</div>
<div class="t" style="left:52px;width:205px;text-align:center;top:619px;font-size:13px">Label_001-18.cyc</div>
<div class="t" style="left:258px;width:153px;text-align:center;top:619px;font-size:13px">晚风</div>
<svg class="a" style="left:444px;top:619px" width="14" height="14" viewBox="0 0 14 14"><rect x="0.5" y="0.5" width="13" height="13" fill="#fff" stroke="#333" stroke-width="1"/><path d="M3 7l3 3 5-7" stroke="#111" stroke-width="2" fill="none"/></svg>
<svg class="a" style="left:524px;top:619px" width="14" height="14" viewBox="0 0 14 14"><rect x="0.5" y="0.5" width="13" height="13" fill="#fff" stroke="#333" stroke-width="1"/><path d="M3 7l3 3 5-7" stroke="#111" stroke-width="2" fill="none"/></svg>
<svg class="a" style="left:604px;top:619px" width="14" height="14" viewBox="0 0 14 14"><rect x="0.5" y="0.5" width="13" height="13" fill="#fff" stroke="#333" stroke-width="1"/><path d="M3 7l3 3 5-7" stroke="#111" stroke-width="2" fill="none"/></svg>
<div class="t" style="left:652px;width:50px;text-align:center;top:619px;font-size:13px">18</div>
<div class="t" style="left:702px;width:80px;text-align:center;top:619px;font-size:13px;color:#2a6ab8">2</div>
<div class="t" style="left:782px;width:52px;text-align:center;top:619px;font-size:13px;color:#2a6ab8">0</div>
<div class="t" style="left:834px;width:52px;text-align:center;top:619px;font-size:13px;color:#2a6ab8">1</div>
<div class="a" style="left:886px;top:612px;width:28px;height:28px;border-radius:14px;background:#3a9aa0;opacity:0.7"></div>
<div class="a" style="left:891px;top:617px;width:18px;height:18px;border-radius:9px;background:#0e8a20"></div>
<div class="t" style="left:919px;top:619px;font-size:13px;letter-spacing:-0.5px">贴标加工中</div>
<div class="btn" style="left:1007px;top:613px;width:76px;height:26px;line-height:24px;font-size:17px">启动</div>
<div class="t" style="left:0;width:51px;text-align:center;top:649px;font-size:13px">2</div>
<div class="t" style="left:52px;width:205px;text-align:center;top:649px;font-size:13px">Label_002-18.cyc</div>
<div class="t" style="left:258px;width:153px;text-align:center;top:649px;font-size:13px">晚风</div>
<svg class="a" style="left:444px;top:649px" width="14" height="14" viewBox="0 0 14 14"><rect x="0.5" y="0.5" width="13" height="13" fill="#fff" stroke="#333" stroke-width="1"/><path d="M3 7l3 3 5-7" stroke="#111" stroke-width="2" fill="none"/></svg>
<svg class="a" style="left:524px;top:649px" width="14" height="14" viewBox="0 0 14 14"><rect x="0.5" y="0.5" width="13" height="13" fill="#fff" stroke="#333" stroke-width="1"/><path d="M3 7l3 3 5-7" stroke="#111" stroke-width="2" fill="none"/></svg>
<svg class="a" style="left:604px;top:649px" width="14" height="14" viewBox="0 0 14 14"><rect x="0.5" y="0.5" width="13" height="13" fill="#fff" stroke="#333" stroke-width="1"/><path d="M3 7l3 3 5-7" stroke="#111" stroke-width="2" fill="none"/></svg>
<div class="t" style="left:652px;width:50px;text-align:center;top:649px;font-size:13px">18</div>
<div class="t" style="left:702px;width:80px;text-align:center;top:649px;font-size:13px;color:#2a6ab8">2</div>
<div class="t" style="left:782px;width:52px;text-align:center;top:649px;font-size:13px;color:#2a6ab8">0</div>
<div class="t" style="left:834px;width:52px;text-align:center;top:649px;font-size:13px;color:#2a6ab8">1</div>
<div class="a" style="left:886px;top:642px;width:28px;height:28px;border-radius:14px;background:#f2dc8c;opacity:0.8"></div>
<div class="a" style="left:890px;top:646px;width:20px;height:20px;border-radius:10px;background:#f4c400"></div>
<div class="t" style="left:919px;top:649px;font-size:13px;letter-spacing:-0.5px">贴标等待加工</div>
<div class="btn" style="left:1007px;top:643px;width:76px;height:26px;line-height:24px;font-size:17px">启动</div>
<div class="t" style="left:0;width:51px;text-align:center;top:679px;font-size:13px">3</div>
<div class="t" style="left:52px;width:205px;text-align:center;top:679px;font-size:13px">Label_003-18.cyc</div>
<div class="t" style="left:258px;width:153px;text-align:center;top:679px;font-size:13px">晚风</div>
<svg class="a" style="left:444px;top:679px" width="14" height="14" viewBox="0 0 14 14"><rect x="0.5" y="0.5" width="13" height="13" fill="#fff" stroke="#333" stroke-width="1"/><path d="M3 7l3 3 5-7" stroke="#111" stroke-width="2" fill="none"/></svg>
<svg class="a" style="left:524px;top:679px" width="14" height="14" viewBox="0 0 14 14"><rect x="0.5" y="0.5" width="13" height="13" fill="#fff" stroke="#333" stroke-width="1"/><path d="M3 7l3 3 5-7" stroke="#111" stroke-width="2" fill="none"/></svg>
<svg class="a" style="left:604px;top:679px" width="14" height="14" viewBox="0 0 14 14"><rect x="0.5" y="0.5" width="13" height="13" fill="#fff" stroke="#333" stroke-width="1"/><path d="M3 7l3 3 5-7" stroke="#111" stroke-width="2" fill="none"/></svg>
<div class="t" style="left:652px;width:50px;text-align:center;top:679px;font-size:13px">18</div>
<div class="t" style="left:702px;width:80px;text-align:center;top:679px;font-size:13px;color:#2a6ab8">2</div>
<div class="t" style="left:782px;width:52px;text-align:center;top:679px;font-size:13px;color:#2a6ab8">0</div>
<div class="t" style="left:834px;width:52px;text-align:center;top:679px;font-size:13px;color:#2a6ab8">1</div>
<div class="a" style="left:886px;top:672px;width:28px;height:28px;border-radius:14px;background:#f2dc8c;opacity:0.8"></div>
<div class="a" style="left:890px;top:676px;width:20px;height:20px;border-radius:10px;background:#f4c400"></div>
<div class="t" style="left:919px;top:679px;font-size:13px;letter-spacing:-0.5px">贴标等待加工</div>
<div class="btn" style="left:1007px;top:673px;width:76px;height:26px;line-height:24px;font-size:17px">启动</div>
<div class="t" style="left:0;width:51px;text-align:center;top:709px;font-size:13px">4</div>
<div class="t" style="left:52px;width:205px;text-align:center;top:709px;font-size:13px">Label_004-18.cyc</div>
<div class="t" style="left:258px;width:153px;text-align:center;top:709px;font-size:13px">晚风</div>
<svg class="a" style="left:444px;top:709px" width="14" height="14" viewBox="0 0 14 14"><rect x="0.5" y="0.5" width="13" height="13" fill="#fff" stroke="#333" stroke-width="1"/><path d="M3 7l3 3 5-7" stroke="#111" stroke-width="2" fill="none"/></svg>
<svg class="a" style="left:524px;top:709px" width="14" height="14" viewBox="0 0 14 14"><rect x="0.5" y="0.5" width="13" height="13" fill="#fff" stroke="#333" stroke-width="1"/><path d="M3 7l3 3 5-7" stroke="#111" stroke-width="2" fill="none"/></svg>
<svg class="a" style="left:604px;top:709px" width="14" height="14" viewBox="0 0 14 14"><rect x="0.5" y="0.5" width="13" height="13" fill="#fff" stroke="#333" stroke-width="1"/><path d="M3 7l3 3 5-7" stroke="#111" stroke-width="2" fill="none"/></svg>
<div class="t" style="left:652px;width:50px;text-align:center;top:709px;font-size:13px">18</div>
<div class="t" style="left:702px;width:80px;text-align:center;top:709px;font-size:13px;color:#2a6ab8">2</div>
<div class="t" style="left:782px;width:52px;text-align:center;top:709px;font-size:13px;color:#2a6ab8">0</div>
<div class="t" style="left:834px;width:52px;text-align:center;top:709px;font-size:13px;color:#2a6ab8">1</div>
<div class="a" style="left:886px;top:702px;width:28px;height:28px;border-radius:14px;background:#f2dc8c;opacity:0.8"></div>
<div class="a" style="left:890px;top:706px;width:20px;height:20px;border-radius:10px;background:#f4c400"></div>
<div class="t" style="left:919px;top:709px;font-size:13px;letter-spacing:-0.5px">贴标等待加工</div>
<div class="btn" style="left:1007px;top:703px;width:76px;height:26px;line-height:24px;font-size:17px">启动</div>
<div class="t" style="left:0;width:51px;text-align:center;top:739px;font-size:13px">5</div>
<div class="t" style="left:52px;width:205px;text-align:center;top:739px;font-size:13px">Label_005-18.cyc</div>
<div class="t" style="left:258px;width:153px;text-align:center;top:739px;font-size:13px">晚风</div>
<svg class="a" style="left:444px;top:739px" width="14" height="14" viewBox="0 0 14 14"><rect x="0.5" y="0.5" width="13" height="13" fill="#fff" stroke="#333" stroke-width="1"/><path d="M3 7l3 3 5-7" stroke="#111" stroke-width="2" fill="none"/></svg>
<svg class="a" style="left:524px;top:739px" width="14" height="14" viewBox="0 0 14 14"><rect x="0.5" y="0.5" width="13" height="13" fill="#fff" stroke="#333" stroke-width="1"/><path d="M3 7l3 3 5-7" stroke="#111" stroke-width="2" fill="none"/></svg>
<svg class="a" style="left:604px;top:739px" width="14" height="14" viewBox="0 0 14 14"><rect x="0.5" y="0.5" width="13" height="13" fill="#fff" stroke="#333" stroke-width="1"/><path d="M3 7l3 3 5-7" stroke="#111" stroke-width="2" fill="none"/></svg>
<div class="t" style="left:652px;width:50px;text-align:center;top:739px;font-size:13px">18</div>
<div class="t" style="left:702px;width:80px;text-align:center;top:739px;font-size:13px;color:#2a6ab8">2</div>
<div class="t" style="left:782px;width:52px;text-align:center;top:739px;font-size:13px;color:#2a6ab8">0</div>
<div class="t" style="left:834px;width:52px;text-align:center;top:739px;font-size:13px;color:#2a6ab8">1</div>
<div class="a" style="left:886px;top:732px;width:28px;height:28px;border-radius:14px;background:#f2dc8c;opacity:0.8"></div>
<div class="a" style="left:890px;top:736px;width:20px;height:20px;border-radius:10px;background:#f4c400"></div>
<div class="t" style="left:919px;top:739px;font-size:13px;letter-spacing:-0.5px">贴标等待加工</div>
<div class="btn" style="left:1007px;top:733px;width:76px;height:26px;line-height:24px;font-size:17px">启动</div>
<div class="t" style="left:0;width:51px;text-align:center;top:769px;font-size:13px">6</div>
<div class="t" style="left:52px;width:205px;text-align:center;top:769px;font-size:13px">Label_006-18.cyc</div>
<div class="t" style="left:258px;width:153px;text-align:center;top:769px;font-size:13px">晚风</div>
<svg class="a" style="left:444px;top:769px" width="14" height="14" viewBox="0 0 14 14"><rect x="0.5" y="0.5" width="13" height="13" fill="#fff" stroke="#333" stroke-width="1"/><path d="M3 7l3 3 5-7" stroke="#111" stroke-width="2" fill="none"/></svg>
<svg class="a" style="left:524px;top:769px" width="14" height="14" viewBox="0 0 14 14"><rect x="0.5" y="0.5" width="13" height="13" fill="#fff" stroke="#333" stroke-width="1"/><path d="M3 7l3 3 5-7" stroke="#111" stroke-width="2" fill="none"/></svg>
<svg class="a" style="left:604px;top:769px" width="14" height="14" viewBox="0 0 14 14"><rect x="0.5" y="0.5" width="13" height="13" fill="#fff" stroke="#333" stroke-width="1"/><path d="M3 7l3 3 5-7" stroke="#111" stroke-width="2" fill="none"/></svg>
<div class="t" style="left:652px;width:50px;text-align:center;top:769px;font-size:13px">18</div>
<div class="t" style="left:702px;width:80px;text-align:center;top:769px;font-size:13px;color:#2a6ab8">2</div>
<div class="t" style="left:782px;width:52px;text-align:center;top:769px;font-size:13px;color:#2a6ab8">0</div>
<div class="t" style="left:834px;width:52px;text-align:center;top:769px;font-size:13px;color:#2a6ab8">1</div>
<div class="a" style="left:886px;top:762px;width:28px;height:28px;border-radius:14px;background:#f2dc8c;opacity:0.8"></div>
<div class="a" style="left:890px;top:766px;width:20px;height:20px;border-radius:10px;background:#f4c400"></div>
<div class="t" style="left:919px;top:769px;font-size:13px;letter-spacing:-0.5px">贴标等待加工</div>
<div class="btn" style="left:1007px;top:763px;width:76px;height:26px;line-height:24px;font-size:17px">启动</div>
<div class="t" style="left:0;width:51px;text-align:center;top:799px;font-size:13px">7</div>
<div class="t" style="left:52px;width:205px;text-align:center;top:799px;font-size:13px">Label_007-18.cyc</div>
<div class="t" style="left:258px;width:153px;text-align:center;top:799px;font-size:13px">晚风</div>
<svg class="a" style="left:444px;top:799px" width="14" height="14" viewBox="0 0 14 14"><rect x="0.5" y="0.5" width="13" height="13" fill="#fff" stroke="#333" stroke-width="1"/><path d="M3 7l3 3 5-7" stroke="#111" stroke-width="2" fill="none"/></svg>
<svg class="a" style="left:524px;top:799px" width="14" height="14" viewBox="0 0 14 14"><rect x="0.5" y="0.5" width="13" height="13" fill="#fff" stroke="#333" stroke-width="1"/><path d="M3 7l3 3 5-7" stroke="#111" stroke-width="2" fill="none"/></svg>
<svg class="a" style="left:604px;top:799px" width="14" height="14" viewBox="0 0 14 14"><rect x="0.5" y="0.5" width="13" height="13" fill="#fff" stroke="#333" stroke-width="1"/><path d="M3 7l3 3 5-7" stroke="#111" stroke-width="2" fill="none"/></svg>
<div class="t" style="left:652px;width:50px;text-align:center;top:799px;font-size:13px">18</div>
<div class="t" style="left:702px;width:80px;text-align:center;top:799px;font-size:13px;color:#2a6ab8">2</div>
<div class="t" style="left:782px;width:52px;text-align:center;top:799px;font-size:13px;color:#2a6ab8">0</div>
<div class="t" style="left:834px;width:52px;text-align:center;top:799px;font-size:13px;color:#2a6ab8">1</div>
<div class="a" style="left:886px;top:792px;width:28px;height:28px;border-radius:14px;background:#f2dc8c;opacity:0.8"></div>
<div class="a" style="left:890px;top:796px;width:20px;height:20px;border-radius:10px;background:#f4c400"></div>
<div class="t" style="left:919px;top:799px;font-size:13px;letter-spacing:-0.5px">贴标等待加工</div>
<div class="btn" style="left:1007px;top:793px;width:76px;height:26px;line-height:24px;font-size:17px">启动</div>
<div class="t" style="left:0;width:51px;text-align:center;top:829px;font-size:13px">8</div>
<div class="t" style="left:52px;width:205px;text-align:center;top:829px;font-size:13px">Label_008-18.cyc</div>
<div class="t" style="left:258px;width:153px;text-align:center;top:829px;font-size:13px">晚风</div>
<svg class="a" style="left:444px;top:829px" width="14" height="14" viewBox="0 0 14 14"><rect x="0.5" y="0.5" width="13" height="13" fill="#fff" stroke="#333" stroke-width="1"/><path d="M3 7l3 3 5-7" stroke="#111" stroke-width="2" fill="none"/></svg>
<svg class="a" style="left:524px;top:829px" width="14" height="14" viewBox="0 0 14 14"><rect x="0.5" y="0.5" width="13" height="13" fill="#fff" stroke="#333" stroke-width="1"/><path d="M3 7l3 3 5-7" stroke="#111" stroke-width="2" fill="none"/></svg>
<svg class="a" style="left:604px;top:829px" width="14" height="14" viewBox="0 0 14 14"><rect x="0.5" y="0.5" width="13" height="13" fill="#fff" stroke="#333" stroke-width="1"/><path d="M3 7l3 3 5-7" stroke="#111" stroke-width="2" fill="none"/></svg>
<div class="t" style="left:652px;width:50px;text-align:center;top:829px;font-size:13px">18</div>
<div class="t" style="left:702px;width:80px;text-align:center;top:829px;font-size:13px;color:#2a6ab8">2</div>
<div class="t" style="left:782px;width:52px;text-align:center;top:829px;font-size:13px;color:#2a6ab8">0</div>
<div class="t" style="left:834px;width:52px;text-align:center;top:829px;font-size:13px;color:#2a6ab8">1</div>
<div class="a" style="left:886px;top:822px;width:28px;height:28px;border-radius:14px;background:#f2dc8c;opacity:0.8"></div>
<div class="a" style="left:890px;top:826px;width:20px;height:20px;border-radius:10px;background:#f4c400"></div>
<div class="t" style="left:919px;top:829px;font-size:13px;letter-spacing:-0.5px">贴标等待加工</div>
<div class="btn" style="left:1007px;top:823px;width:76px;height:26px;line-height:24px;font-size:17px">启动</div>
<div class="t" style="left:0;width:51px;text-align:center;top:859px;font-size:13px">9</div>
<div class="t" style="left:52px;width:205px;text-align:center;top:859px;font-size:13px">Label_009-18.cyc</div>
<div class="t" style="left:258px;width:153px;text-align:center;top:859px;font-size:13px">晚风</div>
<svg class="a" style="left:444px;top:859px" width="14" height="14" viewBox="0 0 14 14"><rect x="0.5" y="0.5" width="13" height="13" fill="#fff" stroke="#333" stroke-width="1"/><path d="M3 7l3 3 5-7" stroke="#111" stroke-width="2" fill="none"/></svg>
<svg class="a" style="left:524px;top:859px" width="14" height="14" viewBox="0 0 14 14"><rect x="0.5" y="0.5" width="13" height="13" fill="#fff" stroke="#333" stroke-width="1"/><path d="M3 7l3 3 5-7" stroke="#111" stroke-width="2" fill="none"/></svg>
<svg class="a" style="left:604px;top:859px" width="14" height="14" viewBox="0 0 14 14"><rect x="0.5" y="0.5" width="13" height="13" fill="#fff" stroke="#333" stroke-width="1"/><path d="M3 7l3 3 5-7" stroke="#111" stroke-width="2" fill="none"/></svg>
<div class="t" style="left:652px;width:50px;text-align:center;top:859px;font-size:13px">18</div>
<div class="t" style="left:702px;width:80px;text-align:center;top:859px;font-size:13px;color:#2a6ab8">2</div>
<div class="t" style="left:782px;width:52px;text-align:center;top:859px;font-size:13px;color:#2a6ab8">0</div>
<div class="t" style="left:834px;width:52px;text-align:center;top:859px;font-size:13px;color:#2a6ab8">1</div>
<div class="a" style="left:886px;top:852px;width:28px;height:28px;border-radius:14px;background:#f2dc8c;opacity:0.8"></div>
<div class="a" style="left:890px;top:856px;width:20px;height:20px;border-radius:10px;background:#f4c400"></div>
<div class="t" style="left:919px;top:859px;font-size:13px;letter-spacing:-0.5px">贴标等待加工</div>
<div class="btn" style="left:1007px;top:853px;width:76px;height:26px;line-height:24px;font-size:17px">启动</div>
<div class="t" style="left:0;width:51px;text-align:center;top:889px;font-size:13px">10</div>
<div class="t" style="left:52px;width:205px;text-align:center;top:889px;font-size:13px">Label_010-18.cyc</div>
<div class="t" style="left:258px;width:153px;text-align:center;top:889px;font-size:13px">晚风</div>
<svg class="a" style="left:444px;top:889px" width="14" height="14" viewBox="0 0 14 14"><rect x="0.5" y="0.5" width="13" height="13" fill="#fff" stroke="#333" stroke-width="1"/><path d="M3 7l3 3 5-7" stroke="#111" stroke-width="2" fill="none"/></svg>
<svg class="a" style="left:524px;top:889px" width="14" height="14" viewBox="0 0 14 14"><rect x="0.5" y="0.5" width="13" height="13" fill="#fff" stroke="#333" stroke-width="1"/><path d="M3 7l3 3 5-7" stroke="#111" stroke-width="2" fill="none"/></svg>
<svg class="a" style="left:604px;top:889px" width="14" height="14" viewBox="0 0 14 14"><rect x="0.5" y="0.5" width="13" height="13" fill="#fff" stroke="#333" stroke-width="1"/><path d="M3 7l3 3 5-7" stroke="#111" stroke-width="2" fill="none"/></svg>
<div class="t" style="left:652px;width:50px;text-align:center;top:889px;font-size:13px">18</div>
<div class="t" style="left:702px;width:80px;text-align:center;top:889px;font-size:13px;color:#2a6ab8">2</div>
<div class="t" style="left:782px;width:52px;text-align:center;top:889px;font-size:13px;color:#2a6ab8">0</div>
<div class="t" style="left:834px;width:52px;text-align:center;top:889px;font-size:13px;color:#2a6ab8">1</div>
<div class="a" style="left:886px;top:882px;width:28px;height:28px;border-radius:14px;background:#f2dc8c;opacity:0.8"></div>
<div class="a" style="left:890px;top:886px;width:20px;height:20px;border-radius:10px;background:#f4c400"></div>
<div class="t" style="left:919px;top:889px;font-size:13px;letter-spacing:-0.5px">贴标等待加工</div>
<div class="btn" style="left:1007px;top:883px;width:76px;height:26px;line-height:24px;font-size:17px">启动</div>
<div class="t" style="left:0;width:51px;text-align:center;top:919px;font-size:13px">11</div>
<div class="t" style="left:52px;width:205px;text-align:center;top:919px;font-size:13px">Label_011-18.cyc</div>
<div class="t" style="left:258px;width:153px;text-align:center;top:919px;font-size:13px">晚风</div>
<svg class="a" style="left:444px;top:919px" width="14" height="14" viewBox="0 0 14 14"><rect x="0.5" y="0.5" width="13" height="13" fill="#fff" stroke="#333" stroke-width="1"/><path d="M3 7l3 3 5-7" stroke="#111" stroke-width="2" fill="none"/></svg>
<svg class="a" style="left:524px;top:919px" width="14" height="14" viewBox="0 0 14 14"><rect x="0.5" y="0.5" width="13" height="13" fill="#fff" stroke="#333" stroke-width="1"/><path d="M3 7l3 3 5-7" stroke="#111" stroke-width="2" fill="none"/></svg>
<svg class="a" style="left:604px;top:919px" width="14" height="14" viewBox="0 0 14 14"><rect x="0.5" y="0.5" width="13" height="13" fill="#fff" stroke="#333" stroke-width="1"/><path d="M3 7l3 3 5-7" stroke="#111" stroke-width="2" fill="none"/></svg>
<div class="t" style="left:652px;width:50px;text-align:center;top:919px;font-size:13px">18</div>
<div class="t" style="left:702px;width:80px;text-align:center;top:919px;font-size:13px;color:#2a6ab8">2</div>
<div class="t" style="left:782px;width:52px;text-align:center;top:919px;font-size:13px;color:#2a6ab8">0</div>
<div class="t" style="left:834px;width:52px;text-align:center;top:919px;font-size:13px;color:#2a6ab8">1</div>
<div class="a" style="left:886px;top:912px;width:28px;height:28px;border-radius:14px;background:#f2dc8c;opacity:0.8"></div>
<div class="a" style="left:890px;top:916px;width:20px;height:20px;border-radius:10px;background:#f4c400"></div>
<div class="t" style="left:919px;top:919px;font-size:13px;letter-spacing:-0.5px">贴标等待加工</div>
<div class="btn" style="left:1007px;top:913px;width:76px;height:26px;line-height:24px;font-size:17px">启动</div>
<div class="t" style="left:0;width:51px;text-align:center;top:949px;font-size:13px">12</div>
<div class="t" style="left:52px;width:205px;text-align:center;top:949px;font-size:13px">Label_012-18.cyc</div>
<div class="t" style="left:258px;width:153px;text-align:center;top:949px;font-size:13px">晚风</div>
<svg class="a" style="left:444px;top:949px" width="14" height="14" viewBox="0 0 14 14"><rect x="0.5" y="0.5" width="13" height="13" fill="#fff" stroke="#333" stroke-width="1"/><path d="M3 7l3 3 5-7" stroke="#111" stroke-width="2" fill="none"/></svg>
<svg class="a" style="left:524px;top:949px" width="14" height="14" viewBox="0 0 14 14"><rect x="0.5" y="0.5" width="13" height="13" fill="#fff" stroke="#333" stroke-width="1"/><path d="M3 7l3 3 5-7" stroke="#111" stroke-width="2" fill="none"/></svg>
<svg class="a" style="left:604px;top:949px" width="14" height="14" viewBox="0 0 14 14"><rect x="0.5" y="0.5" width="13" height="13" fill="#fff" stroke="#333" stroke-width="1"/><path d="M3 7l3 3 5-7" stroke="#111" stroke-width="2" fill="none"/></svg>
<div class="t" style="left:652px;width:50px;text-align:center;top:949px;font-size:13px">18</div>
<div class="t" style="left:702px;width:80px;text-align:center;top:949px;font-size:13px;color:#2a6ab8">2</div>
<div class="t" style="left:782px;width:52px;text-align:center;top:949px;font-size:13px;color:#2a6ab8">0</div>
<div class="t" style="left:834px;width:52px;text-align:center;top:949px;font-size:13px;color:#2a6ab8">1</div>
<div class="a" style="left:886px;top:942px;width:28px;height:28px;border-radius:14px;background:#f2dc8c;opacity:0.8"></div>
<div class="a" style="left:890px;top:946px;width:20px;height:20px;border-radius:10px;background:#f4c400"></div>
<div class="t" style="left:919px;top:949px;font-size:13px;letter-spacing:-0.5px">贴标等待加工</div>
<div class="btn" style="left:1007px;top:943px;width:76px;height:26px;line-height:24px;font-size:17px">启动</div>
<div class="t" style="left:0;width:51px;text-align:center;top:979px;font-size:13px">13</div>
<div class="t" style="left:52px;width:205px;text-align:center;top:979px;font-size:13px">Label_013-18.cyc</div>
<div class="t" style="left:258px;width:153px;text-align:center;top:979px;font-size:13px">晚风</div>
<svg class="a" style="left:444px;top:979px" width="14" height="14" viewBox="0 0 14 14"><rect x="0.5" y="0.5" width="13" height="13" fill="#fff" stroke="#333" stroke-width="1"/><path d="M3 7l3 3 5-7" stroke="#111" stroke-width="2" fill="none"/></svg>
<svg class="a" style="left:524px;top:979px" width="14" height="14" viewBox="0 0 14 14"><rect x="0.5" y="0.5" width="13" height="13" fill="#fff" stroke="#333" stroke-width="1"/><path d="M3 7l3 3 5-7" stroke="#111" stroke-width="2" fill="none"/></svg>
<svg class="a" style="left:604px;top:979px" width="14" height="14" viewBox="0 0 14 14"><rect x="0.5" y="0.5" width="13" height="13" fill="#fff" stroke="#333" stroke-width="1"/><path d="M3 7l3 3 5-7" stroke="#111" stroke-width="2" fill="none"/></svg>
<div class="t" style="left:652px;width:50px;text-align:center;top:979px;font-size:13px">18</div>
<div class="t" style="left:702px;width:80px;text-align:center;top:979px;font-size:13px;color:#2a6ab8">2</div>
<div class="t" style="left:782px;width:52px;text-align:center;top:979px;font-size:13px;color:#2a6ab8">0</div>
<div class="t" style="left:834px;width:52px;text-align:center;top:979px;font-size:13px;color:#2a6ab8">1</div>
<div class="a" style="left:886px;top:972px;width:28px;height:28px;border-radius:14px;background:#f2dc8c;opacity:0.8"></div>
<div class="a" style="left:890px;top:976px;width:20px;height:20px;border-radius:10px;background:#f4c400"></div>
<div class="t" style="left:919px;top:979px;font-size:13px;letter-spacing:-0.5px">贴标等待加工</div>
<div class="btn" style="left:1007px;top:973px;width:76px;height:26px;line-height:24px;font-size:17px">启动</div>
<div class="t" style="left:0;width:51px;text-align:center;top:1009px;font-size:13px">14</div>
<div class="t" style="left:52px;width:205px;text-align:center;top:1009px;font-size:13px">Label_014-18.cyc</div>
<div class="t" style="left:258px;width:153px;text-align:center;top:1009px;font-size:13px">晚风</div>
<svg class="a" style="left:444px;top:1009px" width="14" height="14" viewBox="0 0 14 14"><rect x="0.5" y="0.5" width="13" height="13" fill="#fff" stroke="#333" stroke-width="1"/><path d="M3 7l3 3 5-7" stroke="#111" stroke-width="2" fill="none"/></svg>
<svg class="a" style="left:524px;top:1009px" width="14" height="14" viewBox="0 0 14 14"><rect x="0.5" y="0.5" width="13" height="13" fill="#fff" stroke="#333" stroke-width="1"/><path d="M3 7l3 3 5-7" stroke="#111" stroke-width="2" fill="none"/></svg>
<svg class="a" style="left:604px;top:1009px" width="14" height="14" viewBox="0 0 14 14"><rect x="0.5" y="0.5" width="13" height="13" fill="#fff" stroke="#333" stroke-width="1"/><path d="M3 7l3 3 5-7" stroke="#111" stroke-width="2" fill="none"/></svg>
<div class="t" style="left:652px;width:50px;text-align:center;top:1009px;font-size:13px">18</div>
<div class="t" style="left:702px;width:80px;text-align:center;top:1009px;font-size:13px;color:#2a6ab8">2</div>
<div class="t" style="left:782px;width:52px;text-align:center;top:1009px;font-size:13px;color:#2a6ab8">0</div>
<div class="t" style="left:834px;width:52px;text-align:center;top:1009px;font-size:13px;color:#2a6ab8">1</div>
<div class="a" style="left:886px;top:1002px;width:28px;height:28px;border-radius:14px;background:#f2dc8c;opacity:0.8"></div>
<div class="a" style="left:890px;top:1006px;width:20px;height:20px;border-radius:10px;background:#f4c400"></div>
<div class="t" style="left:919px;top:1009px;font-size:13px;letter-spacing:-0.5px">贴标等待加工</div>
<div class="btn" style="left:1007px;top:1003px;width:76px;height:26px;line-height:24px;font-size:17px">启动</div>
<div class="t" style="left:0;width:51px;text-align:center;top:1039px;font-size:13px">15</div>
<div class="t" style="left:52px;width:205px;text-align:center;top:1039px;font-size:13px">Label_015-18.cyc</div>
<div class="t" style="left:258px;width:153px;text-align:center;top:1039px;font-size:13px">晚风</div>
<svg class="a" style="left:444px;top:1039px" width="14" height="14" viewBox="0 0 14 14"><rect x="0.5" y="0.5" width="13" height="13" fill="#fff" stroke="#333" stroke-width="1"/><path d="M3 7l3 3 5-7" stroke="#111" stroke-width="2" fill="none"/></svg>
<svg class="a" style="left:524px;top:1039px" width="14" height="14" viewBox="0 0 14 14"><rect x="0.5" y="0.5" width="13" height="13" fill="#fff" stroke="#333" stroke-width="1"/><path d="M3 7l3 3 5-7" stroke="#111" stroke-width="2" fill="none"/></svg>
<svg class="a" style="left:604px;top:1039px" width="14" height="14" viewBox="0 0 14 14"><rect x="0.5" y="0.5" width="13" height="13" fill="#fff" stroke="#333" stroke-width="1"/><path d="M3 7l3 3 5-7" stroke="#111" stroke-width="2" fill="none"/></svg>
<div class="t" style="left:652px;width:50px;text-align:center;top:1039px;font-size:13px">18</div>
<div class="t" style="left:702px;width:80px;text-align:center;top:1039px;font-size:13px;color:#2a6ab8">2</div>
<div class="t" style="left:782px;width:52px;text-align:center;top:1039px;font-size:13px;color:#2a6ab8">0</div>
<div class="t" style="left:834px;width:52px;text-align:center;top:1039px;font-size:13px;color:#2a6ab8">1</div>
<div class="a" style="left:886px;top:1032px;width:28px;height:28px;border-radius:14px;background:#f2dc8c;opacity:0.8"></div>
<div class="a" style="left:890px;top:1036px;width:20px;height:20px;border-radius:10px;background:#f4c400"></div>
<div class="t" style="left:919px;top:1039px;font-size:13px;letter-spacing:-0.5px">贴标等待加工</div>
<div class="btn" style="left:1007px;top:1033px;width:76px;height:26px;line-height:24px;font-size:17px">启动</div>

<!-- label preview -->
<div class="t" style="left:1101px;top:524px;font-size:16px;font-weight:bold">标签预览</div>
<div class="a" style="left:1170px;top:522px;width:1px;height:22px;background:#555"></div>
<div class="hl" style="left:1086px;top:550px;width:500px"></div>
<div class="a" style="left:1101px;top:566px;width:220px;height:195px;border:1.5px solid #555;background:#f6f6f6"></div>
<div class="t" style="left:1106px;top:600px;font-size:13px;letter-spacing:1.2px;font-family:"Liberation Serif",serif;color:#111;">江山美辰</div>
<div class="t" style="left:1224px;top:600px;font-size:10px;font-weight:bold;letter-spacing:0.5px;font-family:"Liberation Serif",serif;color:#111;">版号: &nbsp;1</div>
<div class="t" style="left:1106px;top:617px;font-size:13px;letter-spacing:1.6px;font-family:"Liberation Serif",serif;color:#111;">柜名:主卧储物柜</div>
<div class="t" style="left:1106px;top:634px;font-size:13px;letter-spacing:1.6px;font-family:"Liberation Serif",serif;color:#111;">板名:背板拉条</div>
<div class="t" style="left:1106px;top:654px;font-size:13px;letter-spacing:1.2px;font-family:"Liberation Serif",serif;color:#111;">尺寸: 58 &nbsp; *986 *18</div>
<div class="t" style="left:1108px;top:673px;font-size:13px;letter-spacing:0.6px;font-family:"Liberation Serif",serif;color:#111;">封边: &nbsp; <span style="font-size:15px">↓</span>1 <span style="font-size:15px">↑</span>1<span style="font-size:15px">←</span>1<span style="font-size:15px">→</span>1</div>
<div class="t" style="left:1112px;top:694px;font-size:15px;font-family:"Liberation Serif",serif;color:#111;">10</div>
<div class="a" style="left:1255px;top:612px;width:58px;height:103px;border:1px solid #222;border-top:3px solid #111;border-right:3px solid #222;background:#f8f8f8"></div>
<div class="a" style="left:1283px;top:614px;width:1px;height:100px;background:#222"></div>
<svg class="a" style="left:1127px;top:714px" width="159" height="24"><rect x="0.0" y="0" width="2" height="24" fill="#111"/><rect x="3.0" y="0" width="2" height="24" fill="#111"/><rect x="6.0" y="0" width="3" height="24" fill="#111"/><rect x="11.0" y="0" width="1" height="24" fill="#111"/><rect x="13.5" y="0" width="3" height="24" fill="#111"/><rect x="17.5" y="0" width="2" height="24" fill="#111"/><rect x="20.5" y="0" width="1" height="24" fill="#111"/><rect x="22.5" y="0" width="1" height="24" fill="#111"/><rect x="25.0" y="0" width="3" height="24" fill="#111"/><rect x="29.0" y="0" width="1.5" height="24" fill="#111"/><rect x="32.5" y="0" width="1" height="24" fill="#111"/><rect x="35.5" y="0" width="1" height="24" fill="#111"/><rect x="37.5" y="0" width="2" height="24" fill="#111"/><rect x="40.5" y="0" width="1.5" height="24" fill="#111"/><rect x="43.0" y="0" width="1" height="24" fill="#111"/><rect x="45.5" y="0" width="1" height="24" fill="#111"/><rect x="47.5" y="0" width="1" height="24" fill="#111"/><rect x="50.5" y="0" width="2" height="24" fill="#111"/><rect x="54.0" y="0" width="1" height="24" fill="#111"/><rect x="56.0" y="0" width="1" height="24" fill="#111"/><rect x="58.0" y="0" width="1" height="24" fill="#111"/><rect x="60.0" y="0" width="1" height="24" fill="#111"/><rect x="62.0" y="0" width="1" height="24" fill="#111"/><rect x="64.0" y="0" width="1" height="24" fill="#111"/><rect x="67.0" y="0" width="2" height="24" fill="#111"/><rect x="70.0" y="0" width="1" height="24" fill="#111"/><rect x="72.0" y="0" width="1.5" height="24" fill="#111"/><rect x="74.5" y="0" width="1" height="24" fill="#111"/><rect x="76.5" y="0" width="1.5" height="24" fill="#111"/><rect x="79.0" y="0" width="1" height="24" fill="#111"/><rect x="81.0" y="0" width="1" height="24" fill="#111"/><rect x="83.0" y="0" width="1" height="24" fill="#111"/><rect x="86.0" y="0" width="2" height="24" fill="#111"/><rect x="89.0" y="0" width="2" height="24" fill="#111"/><rect x="92.0" y="0" width="1" height="24" fill="#111"/><rect x="94.0" y="0" width="1" height="24" fill="#111"/><rect x="96.0" y="0" width="1.5" height="24" fill="#111"/><rect x="98.5" y="0" width="1" height="24" fill="#111"/><rect x="101.0" y="0" width="1.5" height="24" fill="#111"/><rect x="103.5" y="0" width="1" height="24" fill="#111"/><rect x="105.5" y="0" width="1" height="24" fill="#111"/><rect x="107.5" y="0" width="3" height="24" fill="#111"/><rect x="112.0" y="0" width="1" height="24" fill="#111"/><rect x="115.0" y="0" width="3" height="24" fill="#111"/><rect x="119.5" y="0" width="1" height="24" fill="#111"/><rect x="122.0" y="0" width="2" height="24" fill="#111"/><rect x="125.0" y="0" width="1.5" height="24" fill="#111"/><rect x="127.5" y="0" width="2" height="24" fill="#111"/><rect x="130.5" y="0" width="2" height="24" fill="#111"/><rect x="133.5" y="0" width="1" height="24" fill="#111"/><rect x="135.5" y="0" width="3" height="24" fill="#111"/><rect x="140.0" y="0" width="1" height="24" fill="#111"/><rect x="143.0" y="0" width="1" height="24" fill="#111"/><rect x="146.0" y="0" width="1" height="24" fill="#111"/><rect x="148.5" y="0" width="1" height="24" fill="#111"/><rect x="151.5" y="0" width="2" height="24" fill="#111"/><rect x="154.5" y="0" width="3" height="24" fill="#111"/></svg>
<div class="t" style="left:1163px;top:738px;font-size:10px;letter-spacing:0.2px;color:#222;transform:scaleX(1.02);transform-origin:left">20240725-13-010</div>
<svg class="a" style="left:1341px;top:575px" width="240" height="480" viewBox="0 0 240 480"><defs><linearGradient id="wshade" x1="0" x2="1"><stop offset="0" stop-color="#a87538" stop-opacity="0.3"/><stop offset="0.5" stop-color="#a87538" stop-opacity="0.08"/><stop offset="1" stop-color="#a87538" stop-opacity="0"/></linearGradient></defs><rect width="240" height="480" fill="#be8e56"/><rect width="240" height="480" fill="url(#wshade)"/><rect x="38.8" y="235.7" width="10.9" height="233.3" fill="#ae7b40" opacity="0.30"/><rect x="186.3" y="180.6" width="12.1" height="241.6" fill="#ae7b40" opacity="0.31"/><rect x="0.7" y="213.4" width="7.7" height="102.2" fill="#ae7b40" opacity="0.45"/><rect x="54.6" y="-30.9" width="6.3" height="399.2" fill="#ae7b40" opacity="0.43"/><rect x="205.6" y="-34.7" width="10.2" height="185.3" fill="#ae7b40" opacity="0.37"/><rect x="27.2" y="115.8" width="13.5" height="129.5" fill="#ae7b40" opacity="0.45"/><rect x="29.3" y="153.9" width="13.3" height="256.6" fill="#ae7b40" opacity="0.34"/><rect x="113.9" y="-33.3" width="5.9" height="357.1" fill="#ae7b40" opacity="0.31"/><rect x="183.4" y="385.9" width="6.1" height="366.1" fill="#ae7b40" opacity="0.44"/><rect x="179.3" y="278.4" width="9.8" height="119.2" fill="#ae7b40" opacity="0.37"/><rect x="194.3" y="365.4" width="6.0" height="364.0" fill="#ae7b40" opacity="0.35"/><rect x="85.8" y="123.6" width="8.5" height="398.3" fill="#ae7b40" opacity="0.35"/><rect x="6.3" y="273.1" width="4.9" height="397.7" fill="#ae7b40" opacity="0.37"/><rect x="115.5" y="286.7" width="9.5" height="151.1" fill="#ae7b40" opacity="0.40"/><rect x="130.8" y="31.3" width="10.2" height="134.4" fill="#ae7b40" opacity="0.34"/><rect x="217.9" y="218.8" width="7.5" height="178.1" fill="#ae7b40" opacity="0.28"/><rect x="15.4" y="299.7" width="12.1" height="200.0" fill="#ae7b40" opacity="0.42"/><rect x="158.8" y="381.2" width="13.0" height="210.2" fill="#ae7b40" opacity="0.50"/><rect x="230.7" y="-13.0" width="2.5" height="36.4" fill="#a87437" opacity="0.53"/><rect x="160.1" y="59.5" width="1" height="13.7" fill="#a87437" opacity="0.66"/><rect x="185.7" y="8.1" width="2" height="31.6" fill="#a87437" opacity="0.68"/><rect x="158.0" y="185.6" width="1" height="22.0" fill="#a87437" opacity="0.33"/><rect x="81.1" y="461.9" width="1" height="69.2" fill="#a87437" opacity="0.52"/><rect x="60.5" y="426.6" width="2.5" height="47.3" fill="#a87437" opacity="0.73"/><rect x="215.9" y="369.7" width="1.5" height="80.3" fill="#a87437" opacity="0.57"/><rect x="102.3" y="422.3" width="2.5" height="47.1" fill="#a87437" opacity="0.36"/><rect x="141.2" y="356.4" width="1" height="8.8" fill="#a87437" opacity="0.61"/><rect x="229.0" y="109.6" width="1" height="34.7" fill="#a87437" opacity="0.41"/><rect x="229.4" y="106.0" width="2" height="41.3" fill="#a87437" opacity="0.73"/><rect x="217.3" y="49.6" width="1" height="40.6" fill="#a87437" opacity="0.38"/><rect x="154.0" y="15.2" width="1" height="17.8" fill="#a87437" opacity="0.43"/><rect x="73.0" y="174.2" width="1.5" height="80.8" fill="#a87437" opacity="0.58"/><rect x="43.6" y="78.8" width="2" height="69.0" fill="#a87437" opacity="0.64"/><rect x="144.9" y="408.2" width="2.5" height="71.5" fill="#a87437" opacity="0.66"/><rect x="1.9" y="403.6" width="2" height="40.6" fill="#a87437" opacity="0.56"/><rect x="205.1" y="103.9" width="1" height="65.1" fill="#a87437" opacity="0.44"/><rect x="10.1" y="56.5" width="2" height="67.5" fill="#a87437" opacity="0.75"/><rect x="196.2" y="220.1" width="2.5" height="55.0" fill="#a87437" opacity="0.55"/><rect x="14.4" y="339.9" width="2.5" height="87.3" fill="#a87437" opacity="0.44"/><rect x="167.9" y="351.3" width="2.5" height="23.5" fill="#a87437" opacity="0.58"/><rect x="78.2" y="154.1" width="1" height="34.1" fill="#a87437" opacity="0.75"/><rect x="25.8" y="299.3" width="1" height="59.4" fill="#a87437" opacity="0.66"/><rect x="234.6" y="284.5" width="2.5" height="9.6" fill="#a87437" opacity="0.59"/><rect x="106.2" y="231.4" width="2.5" height="79.8" fill="#a87437" opacity="0.33"/><rect x="6.0" y="0.6" width="2" height="30.6" fill="#a87437" opacity="0.57"/><rect x="97.1" y="203.4" width="2" height="27.4" fill="#a87437" opacity="0.47"/><rect x="116.8" y="-1.7" width="1" height="22.2" fill="#a87437" opacity="0.47"/><rect x="145.1" y="362.0" width="1" height="59.4" fill="#a87437" opacity="0.64"/><rect x="160.3" y="322.5" width="2.5" height="64.0" fill="#a87437" opacity="0.41"/><rect x="220.0" y="129.9" width="2" height="39.3" fill="#a87437" opacity="0.54"/><rect x="170.7" y="59.3" width="1" height="24.6" fill="#a87437" opacity="0.69"/><rect x="171.9" y="251.1" width="1" height="14.5" fill="#a87437" opacity="0.44"/><rect x="226.4" y="461.7" width="2" height="89.2" fill="#a87437" opacity="0.37"/><rect x="104.0" y="162.3" width="1.5" height="55.7" fill="#a87437" opacity="0.38"/><rect x="19.7" y="137.8" width="1" height="28.8" fill="#a87437" opacity="0.68"/><rect x="36.8" y="77.9" width="2.5" height="57.0" fill="#a87437" opacity="0.42"/><rect x="91.0" y="208.8" width="2" height="43.8" fill="#a87437" opacity="0.58"/><rect x="67.4" y="307.2" width="1" height="59.0" fill="#a87437" opacity="0.34"/><rect x="234.0" y="-3.2" width="1" height="74.5" fill="#a87437" opacity="0.72"/><rect x="169.1" y="16.7" width="1" height="55.6" fill="#a87437" opacity="0.48"/><rect x="105.9" y="97.7" width="2" height="8.6" fill="#a87437" opacity="0.54"/><rect x="22.7" y="73.2" width="1.5" height="38.4" fill="#a87437" opacity="0.30"/><rect x="39.9" y="367.9" width="2.5" height="75.4" fill="#a87437" opacity="0.54"/><rect x="11.8" y="184.4" width="1" height="80.4" fill="#a87437" opacity="0.41"/><rect x="138.0" y="433.3" width="2.5" height="80.5" fill="#a87437" opacity="0.31"/><rect x="139.7" y="193.5" width="1" height="76.3" fill="#a87437" opacity="0.75"/><rect x="157.9" y="9.2" width="1" height="74.8" fill="#a87437" opacity="0.57"/><rect x="148.9" y="312.8" width="2" height="63.4" fill="#a87437" opacity="0.37"/><rect x="36.8" y="126.0" width="1.5" height="59.4" fill="#a87437" opacity="0.70"/><rect x="17.0" y="71.3" width="1" height="16.0" fill="#a87437" opacity="0.67"/><rect x="86.4" y="8.8" width="1.5" height="11.0" fill="#a87437" opacity="0.52"/><rect x="163.4" y="57.5" width="2" height="16.5" fill="#a87437" opacity="0.72"/><rect x="129.3" y="77.5" width="2" height="23.9" fill="#a87437" opacity="0.73"/><rect x="101.6" y="385.4" width="1.5" height="25.5" fill="#a87437" opacity="0.32"/><rect x="84.5" y="290.2" width="2.5" height="60.7" fill="#a87437" opacity="0.31"/><rect x="88.4" y="59.4" width="2" height="77.8" fill="#a87437" opacity="0.66"/><rect x="217.5" y="86.5" width="1" height="71.8" fill="#a87437" opacity="0.71"/><rect x="128.0" y="455.4" width="1" height="40.0" fill="#a87437" opacity="0.72"/><rect x="224.8" y="-14.5" width="1.5" height="36.9" fill="#a87437" opacity="0.58"/><rect x="145.7" y="297.0" width="2" height="21.2" fill="#a87437" opacity="0.72"/><rect x="128.7" y="81.3" width="2" height="89.8" fill="#a87437" opacity="0.55"/><rect x="186.1" y="426.0" width="1.5" height="27.7" fill="#a87437" opacity="0.57"/><rect x="84.5" y="260.7" width="1.5" height="89.5" fill="#a87437" opacity="0.71"/><rect x="229.1" y="462.3" width="1" height="68.7" fill="#a87437" opacity="0.63"/><rect x="51.0" y="236.3" width="2.5" height="81.4" fill="#a87437" opacity="0.53"/><rect x="29.5" y="304.5" width="1" height="58.3" fill="#a87437" opacity="0.51"/><rect x="118.7" y="298.9" width="1" height="28.7" fill="#a87437" opacity="0.49"/><rect x="90.7" y="213.8" width="2" height="11.3" fill="#a87437" opacity="0.69"/><rect x="49.4" y="267.4" width="1.5" height="73.8" fill="#a87437" opacity="0.63"/><rect x="175.4" y="164.7" width="1" height="40.3" fill="#a87437" opacity="0.30"/><rect x="159.4" y="125.3" width="2.5" height="76.3" fill="#a87437" opacity="0.51"/><rect x="116.6" y="378.1" width="2.5" height="47.6" fill="#a87437" opacity="0.32"/><rect x="88.9" y="224.9" width="1" height="45.8" fill="#a87437" opacity="0.48"/><rect x="150.8" y="332.1" width="2.5" height="13.8" fill="#a87437" opacity="0.42"/><rect x="25.1" y="339.8" width="1.5" height="45.6" fill="#a87437" opacity="0.36"/><rect x="214.6" y="395.4" width="2.5" height="81.0" fill="#a87437" opacity="0.33"/><rect x="73.9" y="51.6" width="1" height="76.2" fill="#a87437" opacity="0.42"/><rect x="163.8" y="296.5" width="1.5" height="50.1" fill="#a87437" opacity="0.36"/><rect x="185.1" y="86.8" width="2" height="64.3" fill="#a87437" opacity="0.45"/><rect x="155.8" y="-15.5" width="1.5" height="77.1" fill="#a87437" opacity="0.43"/><rect x="63.0" y="9.6" width="2" height="70.0" fill="#a87437" opacity="0.57"/><rect x="122.6" y="271.4" width="1" height="44.4" fill="#a87437" opacity="0.53"/><rect x="230.9" y="191.9" width="1.5" height="9.7" fill="#a87437" opacity="0.73"/><rect x="34.2" y="349.9" width="2" height="60.1" fill="#a87437" opacity="0.51"/><rect x="123.3" y="195.2" width="1" height="27.1" fill="#a87437" opacity="0.68"/><rect x="215.4" y="359.6" width="1" height="82.0" fill="#a87437" opacity="0.64"/><rect x="82.8" y="60.9" width="1" height="73.5" fill="#a87437" opacity="0.45"/><rect x="78.8" y="452.6" width="1" height="45.5" fill="#a87437" opacity="0.39"/><rect x="2.5" y="395.2" width="1" height="26.1" fill="#a87437" opacity="0.35"/><rect x="128.3" y="288.0" width="1" height="18.0" fill="#a87437" opacity="0.36"/><rect x="168.1" y="244.0" width="1" height="15.0" fill="#a87437" opacity="0.41"/><rect x="143.9" y="99.9" width="1" height="43.4" fill="#a87437" opacity="0.65"/><rect x="222.8" y="175.8" width="1" height="86.7" fill="#a87437" opacity="0.66"/><rect x="164.9" y="-3.2" width="2" height="48.9" fill="#a87437" opacity="0.70"/><rect x="185.1" y="216.3" width="2.5" height="11.1" fill="#a87437" opacity="0.59"/><rect x="187.0" y="360.4" width="1.5" height="67.0" fill="#a87437" opacity="0.54"/><rect x="39.4" y="161.8" width="1.5" height="48.3" fill="#a87437" opacity="0.42"/><rect x="219.9" y="6.2" width="1.5" height="31.6" fill="#a87437" opacity="0.34"/><rect x="78.0" y="349.2" width="1" height="20.2" fill="#a87437" opacity="0.44"/><rect x="26.9" y="424.2" width="2" height="12.0" fill="#a87437" opacity="0.64"/><rect x="198.6" y="318.5" width="2.5" height="59.5" fill="#a87437" opacity="0.51"/><rect x="133.5" y="335.6" width="1.5" height="11.8" fill="#a87437" opacity="0.58"/><rect x="146.0" y="71.4" width="2" height="82.9" fill="#a87437" opacity="0.49"/><rect x="48.1" y="86.7" width="1" height="21.6" fill="#a87437" opacity="0.73"/><rect x="3.2" y="396.6" width="1" height="87.1" fill="#a87437" opacity="0.41"/><rect x="85.1" y="73.0" width="2" height="65.5" fill="#a87437" opacity="0.70"/><rect x="43.6" y="215.3" width="1.5" height="34.9" fill="#a87437" opacity="0.70"/><rect x="203.1" y="121.0" width="1" height="69.5" fill="#a87437" opacity="0.61"/><rect x="176.4" y="410.7" width="1" height="28.2" fill="#a87437" opacity="0.75"/><rect x="78.6" y="382.3" width="2" height="72.2" fill="#a87437" opacity="0.62"/><rect x="6.7" y="113.7" width="2.5" height="29.9" fill="#a87437" opacity="0.66"/><rect x="147.0" y="367.1" width="1" height="79.5" fill="#a87437" opacity="0.70"/><rect x="197.6" y="224.7" width="1" height="65.5" fill="#a87437" opacity="0.53"/><rect x="232.6" y="166.6" width="2" height="84.1" fill="#a87437" opacity="0.65"/><rect x="124.6" y="47.1" width="1" height="8.3" fill="#a87437" opacity="0.34"/><rect x="109.0" y="3.8" width="2" height="60.2" fill="#a87437" opacity="0.35"/><rect x="122.5" y="299.8" width="1.5" height="79.5" fill="#a87437" opacity="0.43"/><rect x="184.1" y="36.8" width="2.5" height="36.6" fill="#a87437" opacity="0.62"/><rect x="200.4" y="207.0" width="1.5" height="82.4" fill="#a87437" opacity="0.70"/><rect x="63.6" y="46.2" width="1.5" height="36.3" fill="#a87437" opacity="0.72"/><rect x="84.6" y="381.1" width="1" height="30.9" fill="#a87437" opacity="0.65"/><rect x="0.9" y="1.2" width="1.5" height="72.7" fill="#a87437" opacity="0.61"/><rect x="121.1" y="373.5" width="1" height="22.2" fill="#a87437" opacity="0.56"/><rect x="133.0" y="395.0" width="1" height="59.0" fill="#a87437" opacity="0.38"/><rect x="182.6" y="65.2" width="1" height="68.0" fill="#a87437" opacity="0.49"/><rect x="78.3" y="168.2" width="2" height="73.2" fill="#a87437" opacity="0.43"/><rect x="222.7" y="99.6" width="1" height="34.3" fill="#a87437" opacity="0.44"/><rect x="104.0" y="468.0" width="1" height="14.9" fill="#a87437" opacity="0.73"/><rect x="220.4" y="328.7" width="2" height="84.6" fill="#a87437" opacity="0.38"/><rect x="172.6" y="461.0" width="2" height="80.2" fill="#a87437" opacity="0.71"/><rect x="20.3" y="218.4" width="2.5" height="82.6" fill="#a87437" opacity="0.38"/><rect x="131.7" y="282.0" width="1" height="8.7" fill="#a87437" opacity="0.64"/><rect x="237.1" y="49.4" width="2.5" height="60.1" fill="#a87437" opacity="0.58"/><rect x="15.0" y="24.1" width="2" height="41.4" fill="#a87437" opacity="0.74"/><rect x="207.2" y="219.4" width="2" height="29.8" fill="#a87437" opacity="0.55"/><rect x="153.4" y="127.9" width="1" height="84.0" fill="#a87437" opacity="0.36"/><rect x="220.4" y="253.6" width="1.5" height="71.1" fill="#a87437" opacity="0.48"/><rect x="178.7" y="241.3" width="1.5" height="12.2" fill="#a87437" opacity="0.34"/><rect x="48.5" y="205.4" width="1" height="46.8" fill="#a87437" opacity="0.53"/><rect x="58.0" y="211.9" width="2.5" height="71.3" fill="#a87437" opacity="0.61"/><rect x="75.7" y="268.9" width="2.5" height="47.6" fill="#a87437" opacity="0.49"/><rect x="55.1" y="79.8" width="1.5" height="22.7" fill="#a87437" opacity="0.54"/><rect x="230.3" y="26.4" width="1" height="67.3" fill="#a87437" opacity="0.42"/><rect x="180.1" y="272.4" width="2" height="30.2" fill="#a87437" opacity="0.53"/><rect x="20.9" y="295.2" width="2.5" height="59.6" fill="#a87437" opacity="0.35"/><rect x="70.3" y="79.6" width="1" height="52.1" fill="#a87437" opacity="0.61"/><rect x="122.5" y="228.1" width="2.5" height="73.4" fill="#a87437" opacity="0.59"/><rect x="153.7" y="468.3" width="2" height="77.5" fill="#a87437" opacity="0.48"/><rect x="148.2" y="191.3" width="1" height="9.3" fill="#a87437" opacity="0.43"/><rect x="90.4" y="417.0" width="1" height="61.9" fill="#a87437" opacity="0.42"/><rect x="173.1" y="220.9" width="2" height="56.1" fill="#a87437" opacity="0.70"/><rect x="14.3" y="103.4" width="1.5" height="86.8" fill="#a87437" opacity="0.54"/><rect x="123.3" y="312.7" width="1.5" height="86.5" fill="#a87437" opacity="0.41"/><rect x="44.6" y="301.0" width="1.5" height="82.4" fill="#a87437" opacity="0.38"/><rect x="139.5" y="271.6" width="1.5" height="67.1" fill="#a87437" opacity="0.60"/><rect x="20.3" y="395.5" width="1" height="47.4" fill="#a87437" opacity="0.69"/><rect x="144.2" y="450.6" width="1" height="38.9" fill="#a87437" opacity="0.44"/><rect x="188.6" y="51.6" width="1" height="84.8" fill="#a87437" opacity="0.47"/><rect x="150.2" y="177.8" width="1" height="87.0" fill="#a87437" opacity="0.45"/><rect x="161.3" y="295.8" width="1" height="76.0" fill="#a87437" opacity="0.34"/><rect x="235.3" y="36.4" width="1" height="39.3" fill="#a87437" opacity="0.59"/><rect x="131.8" y="113.8" width="2" height="74.6" fill="#a87437" opacity="0.71"/><rect x="12.9" y="262.2" width="2.5" height="20.1" fill="#a87437" opacity="0.53"/><rect x="21.3" y="203.6" width="1" height="41.8" fill="#a87437" opacity="0.50"/><rect x="115.0" y="413.2" width="1.5" height="73.7" fill="#a87437" opacity="0.49"/><rect x="154.6" y="358.0" width="1" height="68.7" fill="#a87437" opacity="0.56"/><rect x="57.9" y="113.2" width="1.5" height="73.2" fill="#a87437" opacity="0.49"/><rect x="187.4" y="166.3" width="2" height="36.1" fill="#a87437" opacity="0.73"/><rect x="217.1" y="133.4" width="1" height="77.0" fill="#a87437" opacity="0.43"/><rect x="197.8" y="-7.2" width="2" height="59.7" fill="#a87437" opacity="0.74"/><rect x="16.7" y="424.7" width="1" height="85.6" fill="#a87437" opacity="0.51"/><rect x="189.7" y="141.4" width="2" height="26.7" fill="#a87437" opacity="0.42"/><rect x="187.8" y="66.7" width="1" height="69.5" fill="#a87437" opacity="0.33"/><rect x="89.2" y="239.6" width="2" height="87.2" fill="#a87437" opacity="0.53"/><rect x="117.8" y="348.6" width="2.5" height="19.9" fill="#a87437" opacity="0.66"/><rect x="95.8" y="73.6" width="2" height="73.3" fill="#a87437" opacity="0.40"/><rect x="196.3" y="62.4" width="1" height="67.9" fill="#a87437" opacity="0.32"/><rect x="143.7" y="321.2" width="2.5" height="24.2" fill="#a87437" opacity="0.35"/><rect x="96.4" y="384.8" width="1" height="83.1" fill="#a87437" opacity="0.69"/><rect x="183.0" y="316.9" width="1" height="76.4" fill="#a87437" opacity="0.41"/><rect x="116.4" y="187.3" width="2" height="13.1" fill="#a87437" opacity="0.74"/><rect x="178.3" y="-7.7" width="1.5" height="52.2" fill="#a87437" opacity="0.36"/><rect x="232.5" y="446.2" width="2.5" height="39.8" fill="#a87437" opacity="0.73"/><rect x="111.3" y="264.5" width="1" height="30.1" fill="#a87437" opacity="0.58"/><rect x="12.1" y="130.3" width="1.5" height="67.0" fill="#a87437" opacity="0.36"/><rect x="143.4" y="258.9" width="1" height="75.9" fill="#a87437" opacity="0.53"/><rect x="38.8" y="236.2" width="2.5" height="72.8" fill="#a87437" opacity="0.74"/><rect x="62.2" y="369.0" width="1" height="36.4" fill="#a87437" opacity="0.51"/><rect x="188.1" y="14.6" width="1.5" height="87.5" fill="#a87437" opacity="0.63"/><rect x="81.6" y="306.0" width="2.5" height="25.8" fill="#a87437" opacity="0.37"/><rect x="114.5" y="444.6" width="2" height="21.5" fill="#a87437" opacity="0.54"/><rect x="115.2" y="440.5" width="1.5" height="13.9" fill="#a87437" opacity="0.38"/><rect x="199.1" y="295.4" width="1" height="61.9" fill="#a87437" opacity="0.40"/><rect x="221.2" y="79.1" width="1" height="38.0" fill="#a87437" opacity="0.52"/><rect x="12.2" y="43.8" width="1" height="36.5" fill="#a87437" opacity="0.49"/><rect x="229.2" y="156.3" width="1.5" height="38.4" fill="#a87437" opacity="0.69"/><rect x="144.0" y="407.4" width="1.5" height="10.7" fill="#a87437" opacity="0.65"/><rect x="59.0" y="291.6" width="1.5" height="55.4" fill="#a87437" opacity="0.48"/><rect x="155.0" y="146.1" width="1.5" height="53.2" fill="#a87437" opacity="0.63"/><rect x="11.6" y="371.8" width="1" height="20.9" fill="#a87437" opacity="0.60"/><rect x="108.8" y="55.7" width="2.5" height="87.1" fill="#a87437" opacity="0.50"/><rect x="164.3" y="52.4" width="1" height="79.6" fill="#a87437" opacity="0.53"/><rect x="10.2" y="38.4" width="2" height="53.8" fill="#a87437" opacity="0.53"/><rect x="76.6" y="438.8" width="2" height="31.3" fill="#a87437" opacity="0.31"/><rect x="59.3" y="383.1" width="2" height="23.3" fill="#a87437" opacity="0.45"/><rect x="110.9" y="197.2" width="1.5" height="88.6" fill="#a87437" opacity="0.69"/><rect x="85.8" y="88.9" width="2" height="61.4" fill="#a87437" opacity="0.38"/><rect x="144.8" y="333.6" width="1" height="48.2" fill="#a87437" opacity="0.57"/><rect x="90.4" y="153.2" width="1" height="20.3" fill="#a87437" opacity="0.50"/><rect x="135.9" y="249.9" width="1.5" height="89.5" fill="#a87437" opacity="0.51"/><rect x="235.4" y="77.1" width="1" height="33.5" fill="#a87437" opacity="0.58"/><rect x="53.8" y="367.2" width="1" height="38.6" fill="#a87437" opacity="0.60"/><rect x="191.2" y="291.9" width="2.5" height="22.2" fill="#a87437" opacity="0.64"/><rect x="93.2" y="36.2" width="2" height="70.6" fill="#a87437" opacity="0.38"/><rect x="172.6" y="-4.8" width="1" height="27.5" fill="#a87437" opacity="0.60"/><rect x="103.3" y="313.8" width="2.5" height="21.0" fill="#a87437" opacity="0.39"/><rect x="106.4" y="18.6" width="2.5" height="81.1" fill="#a87437" opacity="0.52"/><rect x="147.0" y="216.6" width="1" height="43.3" fill="#a87437" opacity="0.57"/><rect x="33.1" y="466.2" width="1" height="54.4" fill="#a87437" opacity="0.59"/><rect x="82.8" y="132.1" width="1" height="59.1" fill="#a87437" opacity="0.58"/><rect x="237.4" y="27.0" width="2.5" height="22.5" fill="#a87437" opacity="0.46"/><rect x="95.1" y="107.2" width="2.5" height="53.8" fill="#a87437" opacity="0.50"/><rect x="73.3" y="192.7" width="1" height="88.3" fill="#a87437" opacity="0.36"/><rect x="215.7" y="394.9" width="2" height="31.8" fill="#a87437" opacity="0.62"/><rect x="128.6" y="329.1" width="2" height="51.6" fill="#a87437" opacity="0.34"/><rect x="206.2" y="90.6" width="1.5" height="29.6" fill="#a87437" opacity="0.49"/><rect x="23.0" y="-15.6" width="1.5" height="89.2" fill="#a87437" opacity="0.45"/><rect x="231.7" y="404.4" width="1" height="67.2" fill="#a87437" opacity="0.60"/><rect x="194.6" y="40.9" width="1.5" height="40.2" fill="#a87437" opacity="0.36"/><rect x="14.4" y="338.4" width="1" height="18.6" fill="#a87437" opacity="0.71"/><rect x="144.1" y="229.4" width="2" height="29.3" fill="#a87437" opacity="0.55"/><rect x="38.4" y="458.5" width="1" height="37.6" fill="#a87437" opacity="0.50"/><rect x="68.4" y="296.1" width="1.5" height="81.6" fill="#a87437" opacity="0.66"/><rect x="51.5" y="272.8" width="1" height="47.3" fill="#a87437" opacity="0.45"/><rect x="116.2" y="394.0" width="1" height="22.8" fill="#a87437" opacity="0.70"/><rect x="36.3" y="183.5" width="2.5" height="61.6" fill="#a87437" opacity="0.42"/><rect x="132.0" y="171.0" width="1" height="39.5" fill="#a87437" opacity="0.50"/><rect x="38.1" y="22.2" width="1" height="73.5" fill="#a87437" opacity="0.50"/><rect x="173.2" y="431.4" width="1" height="86.3" fill="#a87437" opacity="0.66"/><rect x="72.3" y="111.7" width="1" height="23.9" fill="#a87437" opacity="0.59"/><rect x="23.9" y="-18.2" width="1" height="89.6" fill="#a87437" opacity="0.45"/><rect x="10.0" y="351.2" width="2" height="53.2" fill="#a87437" opacity="0.45"/><rect x="122.7" y="434.3" width="2.5" height="18.2" fill="#a87437" opacity="0.40"/><rect x="188.8" y="370.7" width="2.5" height="8.3" fill="#a87437" opacity="0.63"/><rect x="150.6" y="429.5" width="2" height="88.2" fill="#a87437" opacity="0.36"/><rect x="6.8" y="232.6" width="1" height="79.4" fill="#a87437" opacity="0.66"/><rect x="47.1" y="114.8" width="1" height="82.9" fill="#a87437" opacity="0.36"/><rect x="59.3" y="452.1" width="1" height="38.5" fill="#a87437" opacity="0.63"/><rect x="135.5" y="219.8" width="2.5" height="10.4" fill="#a87437" opacity="0.55"/><rect x="204.3" y="258.8" width="2" height="14.8" fill="#a87437" opacity="0.35"/><rect x="39.0" y="92.0" width="2" height="49.1" fill="#a87437" opacity="0.73"/><rect x="141.8" y="67.9" width="2" height="38.3" fill="#a87437" opacity="0.56"/><rect x="92.1" y="239.5" width="1" height="83.4" fill="#a87437" opacity="0.30"/><rect x="190.5" y="121.8" width="1" height="30.1" fill="#a87437" opacity="0.45"/><rect x="130.1" y="323.5" width="1" height="74.0" fill="#a87437" opacity="0.54"/><rect x="76.3" y="333.6" width="2" height="8.0" fill="#a87437" opacity="0.31"/><rect x="182.2" y="208.9" width="2" height="16.3" fill="#a87437" opacity="0.54"/><rect x="26.4" y="138.6" width="1.5" height="82.9" fill="#a87437" opacity="0.50"/><rect x="169.1" y="105.1" width="1.5" height="2.8" fill="#d2ae7e" opacity="0.31"/><rect x="30.4" y="15.8" width="1" height="10.6" fill="#d2ae7e" opacity="0.48"/><rect x="141.0" y="435.4" width="1.5" height="6.8" fill="#d2ae7e" opacity="0.47"/><rect x="198.2" y="70.7" width="1" height="13.4" fill="#d2ae7e" opacity="0.34"/><rect x="47.9" y="293.9" width="1" height="8.0" fill="#d2ae7e" opacity="0.40"/><rect x="171.4" y="338.5" width="1" height="7.1" fill="#d2ae7e" opacity="0.60"/><rect x="94.1" y="154.3" width="1" height="10.2" fill="#d2ae7e" opacity="0.62"/><rect x="190.0" y="259.3" width="1" height="7.4" fill="#d2ae7e" opacity="0.55"/><rect x="55.9" y="467.9" width="1" height="3.2" fill="#d2ae7e" opacity="0.69"/><rect x="232.0" y="42.7" width="1.5" height="9.2" fill="#d2ae7e" opacity="0.32"/><rect x="107.5" y="357.6" width="1.5" height="11.4" fill="#d2ae7e" opacity="0.35"/><rect x="144.7" y="434.5" width="1" height="10.8" fill="#d2ae7e" opacity="0.64"/><rect x="72.7" y="109.0" width="1.5" height="13.0" fill="#d2ae7e" opacity="0.30"/><rect x="192.5" y="233.0" width="1.5" height="10.5" fill="#d2ae7e" opacity="0.49"/><rect x="134.4" y="439.3" width="1.5" height="12.7" fill="#d2ae7e" opacity="0.57"/><rect x="81.3" y="163.0" width="1.5" height="11.8" fill="#d2ae7e" opacity="0.52"/><rect x="208.0" y="96.5" width="1" height="6.0" fill="#d2ae7e" opacity="0.33"/><rect x="80.4" y="192.2" width="1" height="8.2" fill="#d2ae7e" opacity="0.52"/><rect x="21.4" y="366.4" width="1.5" height="4.9" fill="#d2ae7e" opacity="0.42"/><rect x="109.8" y="86.1" width="1" height="4.2" fill="#d2ae7e" opacity="0.45"/><rect x="177.4" y="88.5" width="1.5" height="13.7" fill="#d2ae7e" opacity="0.49"/><rect x="145.4" y="83.9" width="1.5" height="2.7" fill="#d2ae7e" opacity="0.35"/><rect x="127.3" y="413.7" width="1" height="12.6" fill="#d2ae7e" opacity="0.63"/><rect x="82.5" y="369.3" width="1.5" height="4.9" fill="#d2ae7e" opacity="0.62"/><rect x="198.7" y="11.4" width="1" height="7.5" fill="#d2ae7e" opacity="0.70"/><rect x="16.9" y="421.9" width="1.5" height="10.4" fill="#d2ae7e" opacity="0.64"/><rect x="18.2" y="328.6" width="1.5" height="12.8" fill="#d2ae7e" opacity="0.37"/><rect x="15.2" y="85.6" width="1.5" height="6.5" fill="#d2ae7e" opacity="0.60"/><rect x="113.0" y="361.7" width="1" height="7.4" fill="#d2ae7e" opacity="0.32"/><rect x="132.2" y="135.5" width="1" height="10.9" fill="#d2ae7e" opacity="0.50"/><rect x="54.3" y="465.9" width="1.5" height="3.9" fill="#d2ae7e" opacity="0.63"/><rect x="148.9" y="155.6" width="1" height="11.7" fill="#d2ae7e" opacity="0.45"/><rect x="212.8" y="11.2" width="1.5" height="2.7" fill="#d2ae7e" opacity="0.50"/><rect x="3.0" y="138.8" width="1.5" height="8.6" fill="#d2ae7e" opacity="0.65"/><rect x="102.1" y="5.9" width="1" height="4.2" fill="#d2ae7e" opacity="0.51"/><rect x="183.4" y="239.6" width="1.5" height="7.6" fill="#d2ae7e" opacity="0.66"/><rect x="152.0" y="320.6" width="1" height="13.4" fill="#d2ae7e" opacity="0.55"/><rect x="99.4" y="459.0" width="1" height="11.9" fill="#d2ae7e" opacity="0.39"/><rect x="21.4" y="63.7" width="1.5" height="2.7" fill="#d2ae7e" opacity="0.52"/><rect x="226.6" y="366.0" width="1.5" height="6.6" fill="#d2ae7e" opacity="0.33"/><rect x="183.9" y="63.7" width="1" height="13.5" fill="#d2ae7e" opacity="0.69"/><rect x="41.2" y="455.1" width="1" height="5.9" fill="#d2ae7e" opacity="0.53"/><rect x="219.2" y="24.4" width="1.5" height="9.3" fill="#d2ae7e" opacity="0.31"/><rect x="164.7" y="177.9" width="1" height="9.3" fill="#d2ae7e" opacity="0.57"/><rect x="29.3" y="209.2" width="1.5" height="8.2" fill="#d2ae7e" opacity="0.64"/><rect x="5.0" y="271.5" width="1.5" height="10.9" fill="#d2ae7e" opacity="0.60"/><rect x="221.1" y="473.0" width="1" height="4.2" fill="#d2ae7e" opacity="0.47"/><rect x="189.2" y="439.1" width="1.5" height="6.3" fill="#d2ae7e" opacity="0.40"/><rect x="94.7" y="181.3" width="1.5" height="3.6" fill="#d2ae7e" opacity="0.46"/><rect x="201.6" y="283.9" width="1.5" height="3.1" fill="#d2ae7e" opacity="0.44"/><rect x="223.6" y="283.2" width="1.5" height="6.1" fill="#d2ae7e" opacity="0.39"/><rect x="172.8" y="33.6" width="1" height="4.8" fill="#d2ae7e" opacity="0.61"/><rect x="213.5" y="318.3" width="1" height="13.0" fill="#d2ae7e" opacity="0.38"/><rect x="105.1" y="281.4" width="1" height="9.5" fill="#d2ae7e" opacity="0.33"/><rect x="227.2" y="76.9" width="1.5" height="9.7" fill="#d2ae7e" opacity="0.47"/><rect x="93.5" y="188.4" width="1.5" height="12.6" fill="#d2ae7e" opacity="0.63"/><rect x="133.1" y="352.6" width="1" height="9.9" fill="#d2ae7e" opacity="0.46"/><rect x="65.9" y="137.6" width="1" height="12.4" fill="#d2ae7e" opacity="0.60"/><rect x="35.8" y="52.4" width="1.5" height="11.6" fill="#d2ae7e" opacity="0.53"/><rect x="226.4" y="83.2" width="1.5" height="11.1" fill="#d2ae7e" opacity="0.46"/><rect x="17.3" y="254.6" width="1" height="4.5" fill="#d2ae7e" opacity="0.64"/><rect x="170.7" y="228.6" width="1" height="13.5" fill="#d2ae7e" opacity="0.70"/><rect x="64.4" y="93.7" width="1.5" height="10.3" fill="#d2ae7e" opacity="0.65"/><rect x="138.1" y="113.3" width="1" height="11.1" fill="#d2ae7e" opacity="0.60"/><rect x="147.8" y="447.4" width="1.5" height="11.6" fill="#d2ae7e" opacity="0.49"/><rect x="14.5" y="436.5" width="1" height="3.0" fill="#d2ae7e" opacity="0.59"/><rect x="167.0" y="370.4" width="1.5" height="8.5" fill="#d2ae7e" opacity="0.47"/><rect x="82.3" y="25.5" width="1.5" height="5.8" fill="#d2ae7e" opacity="0.51"/><rect x="38.7" y="471.2" width="1" height="10.7" fill="#d2ae7e" opacity="0.60"/><rect x="125.3" y="378.1" width="1.5" height="8.0" fill="#d2ae7e" opacity="0.32"/><rect x="40.5" y="115.6" width="1.5" height="4.3" fill="#d2ae7e" opacity="0.45"/><rect x="216.7" y="79.6" width="1.5" height="10.9" fill="#d2ae7e" opacity="0.70"/><rect x="168.4" y="440.7" width="1" height="5.7" fill="#d2ae7e" opacity="0.33"/><rect x="232.3" y="247.5" width="1.5" height="12.3" fill="#d2ae7e" opacity="0.36"/><rect x="76.3" y="148.1" width="1" height="3.2" fill="#d2ae7e" opacity="0.70"/><rect x="77.7" y="472.6" width="1" height="13.5" fill="#d2ae7e" opacity="0.42"/><rect x="116.6" y="128.6" width="1.5" height="5.3" fill="#d2ae7e" opacity="0.59"/><rect x="182.1" y="393.7" width="1" height="8.7" fill="#d2ae7e" opacity="0.70"/><rect x="48.7" y="8.1" width="1" height="7.6" fill="#d2ae7e" opacity="0.61"/><rect x="148.6" y="469.5" width="1" height="11.0" fill="#d2ae7e" opacity="0.68"/><rect x="223.7" y="104.4" width="1.5" height="11.2" fill="#d2ae7e" opacity="0.39"/><rect x="16.7" y="85.7" width="1.5" height="5.7" fill="#d2ae7e" opacity="0.46"/><rect x="209.3" y="81.7" width="1" height="9.2" fill="#d2ae7e" opacity="0.50"/><rect x="130.2" y="272.3" width="1.5" height="12.4" fill="#d2ae7e" opacity="0.67"/><rect x="124.6" y="39.9" width="1.5" height="8.9" fill="#d2ae7e" opacity="0.59"/><rect x="182.7" y="127.6" width="1.5" height="5.5" fill="#d2ae7e" opacity="0.56"/><rect x="236.0" y="152.9" width="1" height="3.7" fill="#d2ae7e" opacity="0.66"/><rect x="110.0" y="107.2" width="1.5" height="9.7" fill="#d2ae7e" opacity="0.41"/><rect x="55.4" y="71.1" width="1.5" height="7.7" fill="#d2ae7e" opacity="0.46"/><rect x="199.2" y="461.3" width="1.5" height="10.3" fill="#d2ae7e" opacity="0.60"/><rect x="26.7" y="364.2" width="1" height="12.3" fill="#d2ae7e" opacity="0.55"/><rect x="239.9" y="130.8" width="1" height="9.1" fill="#d2ae7e" opacity="0.33"/><rect x="71.6" y="167.8" width="1.5" height="11.2" fill="#d2ae7e" opacity="0.43"/><rect x="168.5" y="49.4" width="1" height="5.3" fill="#d2ae7e" opacity="0.33"/><rect x="114.9" y="100.3" width="1" height="8.5" fill="#d2ae7e" opacity="0.32"/><rect x="129.6" y="254.7" width="1" height="9.2" fill="#d2ae7e" opacity="0.40"/><rect x="93.9" y="129.4" width="1.5" height="2.4" fill="#d2ae7e" opacity="0.68"/><rect x="76.2" y="315.2" width="1" height="5.3" fill="#d2ae7e" opacity="0.45"/><rect x="67.7" y="172.3" width="1.5" height="5.3" fill="#d2ae7e" opacity="0.60"/><rect x="40.0" y="133.9" width="1" height="10.2" fill="#d2ae7e" opacity="0.47"/><rect x="12.2" y="346.7" width="1.5" height="12.8" fill="#d2ae7e" opacity="0.44"/><rect x="188.1" y="317.8" width="1.5" height="7.2" fill="#d2ae7e" opacity="0.53"/><rect x="92.9" y="123.8" width="1.5" height="12.3" fill="#d2ae7e" opacity="0.62"/><rect x="106.6" y="177.0" width="1.5" height="11.2" fill="#d2ae7e" opacity="0.63"/><rect x="222.2" y="271.2" width="1" height="10.2" fill="#d2ae7e" opacity="0.69"/><rect x="227.8" y="307.2" width="1.5" height="3.4" fill="#d2ae7e" opacity="0.56"/><rect x="232.1" y="393.1" width="1" height="3.9" fill="#d2ae7e" opacity="0.43"/><rect x="59.3" y="130.3" width="1.5" height="9.2" fill="#d2ae7e" opacity="0.32"/><rect x="174.8" y="288.9" width="1.5" height="13.7" fill="#d2ae7e" opacity="0.48"/><rect x="28.3" y="254.8" width="1" height="5.1" fill="#d2ae7e" opacity="0.64"/><rect x="6.5" y="91.9" width="1.5" height="2.5" fill="#d2ae7e" opacity="0.59"/><rect x="111.1" y="453.8" width="1.5" height="9.8" fill="#d2ae7e" opacity="0.36"/><rect x="202.9" y="39.0" width="1" height="9.6" fill="#d2ae7e" opacity="0.67"/><rect x="178.3" y="471.9" width="1.5" height="3.5" fill="#d2ae7e" opacity="0.37"/><rect x="111.9" y="346.8" width="1" height="12.1" fill="#d2ae7e" opacity="0.62"/><rect x="214.6" y="120.9" width="1" height="11.8" fill="#d2ae7e" opacity="0.33"/><rect x="28.6" y="232.4" width="1" height="8.5" fill="#d2ae7e" opacity="0.31"/><rect x="148.7" y="429.8" width="1.5" height="6.6" fill="#d2ae7e" opacity="0.63"/><rect x="180.5" y="39.0" width="1.5" height="11.5" fill="#d2ae7e" opacity="0.52"/><rect x="65.1" y="395.7" width="1" height="6.7" fill="#d2ae7e" opacity="0.50"/><rect x="0.5" y="0.5" width="239" height="479" fill="none" stroke="#a9a9a9" stroke-width="1"/></svg>
<div class="a" style="left:1430px;top:577px;width:24px;height:21px;background:#03a42c"></div>
<svg class="a" style="left:1430px;top:577px" width="24" height="20"><path d="M14 3.5v13.5" stroke="#111" stroke-width="2.2"/><path d="M14.5 3.5l-4 3" stroke="#111" stroke-width="1.6"/></svg>
<svg class="a" style="left:1432px;top:577px" width="14" height="12"><path d="M1 4l4.5 4 6.5-6" stroke="#eaffea" stroke-width="1.2" fill="none"/></svg>
<div class="a" style="left:1567px;top:648px;width:13px;height:24px;background:#f4c400;overflow:hidden"><span style="position:absolute;left:6px;top:3px;font-size:17px;line-height:1">2</span></div>
<div class="a" style="left:1390px;top:812px;width:24px;height:24px;background:#f4c400"><span style="position:absolute;left:7px;top:4px;font-size:18px;line-height:1">5</span></div>
<div class="a" style="left:1505px;top:812px;width:24px;height:24px;background:#f4c400"><span style="position:absolute;left:7px;top:4px;font-size:18px;line-height:1">4</span></div>
<div class="a" style="left:1567px;top:884px;width:13px;height:24px;background:#f4c400;overflow:hidden"><span style="position:absolute;left:6px;top:4px;font-size:17px;line-height:1">3</span></div>
<div style="position:absolute;border:1px solid #666;border-radius:4px;background:linear-gradient(#b8d2f0 0%,#dde9f5 55%,#eef3f8 100%);text-align:center;color:#111;left:1096px;top:875px;width:66px;height:26px;line-height:22px;font-size:14px">上一个</div>
<div style="position:absolute;border:1px solid #666;border-radius:4px;background:linear-gradient(#b8d2f0 0%,#dde9f5 55%,#eef3f8 100%);text-align:center;color:#111;left:1096px;top:908px;width:66px;height:26px;line-height:24px;font-size:14px">下一个</div>
<div class="a" style="left:1168px;top:880px;width:163px;height:49px;border:1px solid #555;background:#f8f8f8"></div>
<div class="a" style="left:1222px;top:880px;width:1px;height:49px;background:#555"></div>
<div class="a" style="left:1276px;top:880px;width:1px;height:49px;background:#555"></div>
<div class="a" style="left:1168px;top:904px;width:163px;height:1px;background:#555"></div>
<div class="t" style="left:1168px;width:54px;text-align:center;top:885px;font-size:15px">X</div>
<div class="t" style="left:1222px;width:54px;text-align:center;top:885px;font-size:15px">Y</div>
<div class="t" style="left:1276px;width:54px;text-align:center;top:885px;font-size:15px">R</div>
<div class="t" style="left:1168px;width:54px;text-align:center;top:911px;font-size:11px;font-weight:bold;color:#222">498</div>
<div class="t" style="left:1222px;width:54px;text-align:center;top:911px;font-size:11px;font-weight:bold;color:#222">2404</div>
<div class="t" style="left:1276px;width:54px;text-align:center;top:911px;font-size:11px;font-weight:bold;color:#222">0</div>
<div class="a" style="left:1096px;top:950px;width:121px;height:30px;border-radius:4px;border:1px solid #333;background:#10264a;color:#fff;font-size:20px;text-align:center;line-height:28px">自动补标签</div>
<div style="position:absolute;border:1px solid #666;border-radius:4px;background:linear-gradient(#b8d2f0 0%,#dde9f5 55%,#eef3f8 100%);text-align:center;color:#111;left:1227px;top:950px;width:99px;height:30px;line-height:26px;font-size:14px">打印</div>
<div class="hl" style="left:0;top:1078px;width:1920px;height:2px;background:#4a4a4a"></div>
<div class="a" style="left:1919px;top:23px;width:1px;height:1057px;background:#4a4a4a"></div>
</body></html>
